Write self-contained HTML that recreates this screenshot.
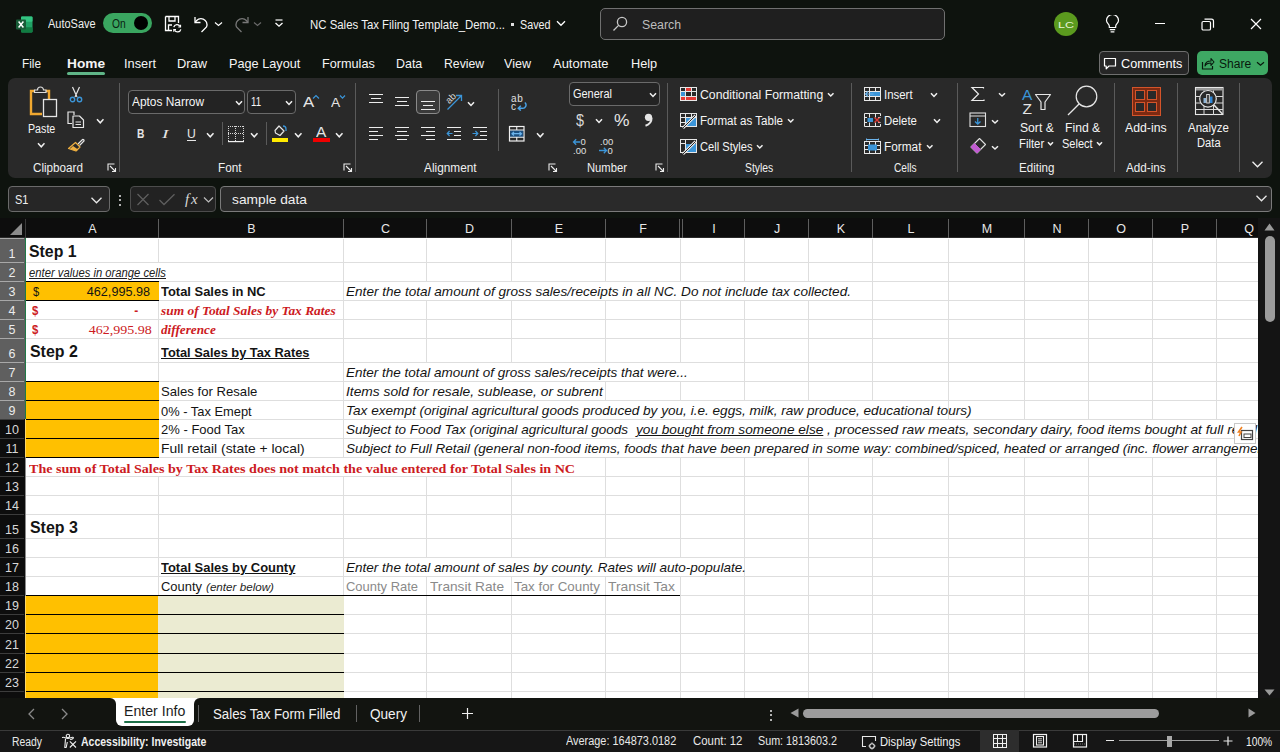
<!DOCTYPE html>
<html><head><meta charset="utf-8"><style>
html,body{margin:0;padding:0;width:1280px;height:752px;overflow:hidden;background:#0e130e;}
div,svg{box-sizing:border-box}
</style></head><body>
<svg style="position:absolute;left:16px;top:16px;" width="17" height="17" viewBox="0 0 17 17" fill="none">
<rect x="5" y="0.5" width="11.5" height="16" rx="1.2" fill="#21a366"/>
<rect x="5" y="0.5" width="11.5" height="5.3" rx="1" fill="#33c481"/>
<rect x="5" y="11.2" width="11.5" height="5.3" rx="1" fill="#107c41"/>
<rect x="0" y="3.5" width="10" height="10" rx="1" fill="#185c37"/>
<path d="M2.6 5.6 L7.4 11.4 M7.4 5.6 L2.6 11.4" stroke="#fff" stroke-width="1.5"/>
</svg>
<div id="t0" style="position:absolute;left:48px;top:17.75px;font-family:'Liberation Sans',sans-serif;font-size:12px;line-height:1;font-weight:400;font-style:normal;color:#f0f0f0;white-space:pre;transform-origin:left;transform:scaleX(0.9146);">AutoSave</div>
<div style="position:absolute;left:103px;top:13px;width:49px;height:20px;background:#3aa660;border-radius:10px;"></div>
<div id="t1" style="position:absolute;left:112px;top:17.50px;font-family:'Liberation Sans',sans-serif;font-size:12px;line-height:1;font-weight:400;font-style:normal;color:#0b1f12;white-space:pre;transform-origin:left;transform:scaleX(0.8554);">On</div>
<div style="position:absolute;left:134px;top:16px;width:14px;height:14px;background:#000;border-radius:50%;"></div>
<svg style="position:absolute;left:164px;top:15px;" width="19" height="19" viewBox="0 0 19 19" fill="none">
<path d="M1.5 1.5 H14.5 V8" stroke="#fff" stroke-width="1.3"/>
<path d="M1.5 1.5 V15.5 H8" stroke="#fff" stroke-width="1.3"/>
<path d="M5 1.5 V6 H11 V1.5" stroke="#fff" stroke-width="1.3"/>
<path d="M4.5 15.5 V10 H8" stroke="#fff" stroke-width="1.3"/>
<path d="M9.8 12.2 A3.3 3.3 0 0 1 16 11.5 M16.8 14.3 A3.3 3.3 0 0 1 10.6 15" stroke="#fff" stroke-width="1.3"/>
<path d="M16.5 9.8 V12 H14.3 M9.8 16.7 V14.5 H12" stroke="#fff" stroke-width="1.2"/>
</svg>
<svg style="position:absolute;left:193px;top:15px;" width="18" height="18" viewBox="0 0 18 18" fill="none">
<path d="M2 2 V7.5 H7.5" stroke="#fff" stroke-width="1.3"/>
<path d="M2.3 7.3 A6 6 0 1 1 13.5 12 L8.5 17" stroke="#fff" stroke-width="1.3"/>
</svg>
<svg style="position:absolute;left:214px;top:21px;" width="9" height="6" viewBox="0 0 9 6" fill="none"><path d="M1 1.5 L4.5 4.5 L8 1.5" stroke="#fff" stroke-width="1.2"/></svg>
<svg style="position:absolute;left:232px;top:15px;" width="18" height="18" viewBox="0 0 18 18" fill="none">
<path d="M16 2 V7.5 H10.5" stroke="#777" stroke-width="1.3"/>
<path d="M15.7 7.3 A6 6 0 1 0 4.5 12 L9.5 17" stroke="#777" stroke-width="1.3"/>
</svg>
<svg style="position:absolute;left:253px;top:21px;" width="9" height="6" viewBox="0 0 9 6" fill="none"><path d="M1 1.5 L4.5 4.5 L8 1.5" stroke="#6a6a6a" stroke-width="1.2"/></svg>
<svg style="position:absolute;left:274px;top:19px;" width="10" height="9" viewBox="0 0 10 9" fill="none"><path d="M1.5 1 H8.5" stroke="#fff" stroke-width="1.2"/><path d="M1.5 4 L5 7.2 L8.5 4" stroke="#fff" stroke-width="1.3"/></svg>
<div id="t2" style="position:absolute;left:310px;top:18.75px;font-family:'Liberation Sans',sans-serif;font-size:12.5px;line-height:1;font-weight:400;font-style:normal;color:#f2f2f2;white-space:pre;transform-origin:left;transform:scaleX(0.9132);">NC Sales Tax Filing Template_Demo...</div>
<div style="position:absolute;left:510.5px;top:23px;width:3px;height:3px;background:#e0e0e0;"></div>
<div id="t3" style="position:absolute;left:520px;top:18.75px;font-family:'Liberation Sans',sans-serif;font-size:12.5px;line-height:1;font-weight:400;font-style:normal;color:#f2f2f2;white-space:pre;transform-origin:left;transform:scaleX(0.8603);">Saved</div>
<svg style="position:absolute;left:556px;top:20px;" width="10" height="7" viewBox="0 0 10 7" fill="none"><path d="M1 1.3 L5 5.3 L9 1.3" stroke="#fff" stroke-width="1.3"/></svg>
<div style="position:absolute;left:600px;top:8px;width:345px;height:32px;background:#1f1f1f;border:1px solid #707070;border-radius:5px;"></div>
<svg style="position:absolute;left:612px;top:16px;" width="17" height="16" viewBox="0 0 17 16" fill="none"><circle cx="10" cy="6" r="4.6" stroke="#c8c8c8" stroke-width="1.3"/><path d="M6.6 9.4 L1.5 14.5" stroke="#c8c8c8" stroke-width="1.3"/></svg>
<div id="t4" style="position:absolute;left:642px;top:18.90px;font-family:'Liberation Sans',sans-serif;font-size:12.5px;line-height:1;font-weight:400;font-style:normal;color:#bdbdbd;white-space:pre;transform-origin:left;transform:scaleX(0.9846);">Search</div>
<div style="position:absolute;left:1054px;top:12px;width:24px;height:24px;background:#5b9a1e;border-radius:50%;"></div>
<div id="t5" style="position:absolute;left:1058px;top:20.00px;font-family:'Liberation Sans',sans-serif;font-size:9.5px;line-height:1;font-weight:400;font-style:normal;color:#e6f3d6;white-space:pre;transform-origin:left;transform:scaleX(1.3162);">LC</div>
<svg style="position:absolute;left:1105px;top:15px;" width="15" height="18" viewBox="0 0 15 18" fill="none">
<path d="M4.3 11 C4.3 9 1.5 8 1.5 5.5 A6 6 0 0 1 13.5 5.5 C13.5 8 10.7 9 10.7 11 V12.5 H4.3 Z" stroke="#fff" stroke-width="1.2" stroke-linejoin="round"/>
<path d="M4.8 14.6 H10.2 M5.6 16.8 H9.4" stroke="#fff" stroke-width="1.2"/>
</svg>
<div style="position:absolute;left:1155px;top:23px;width:10px;height:1px;background:#fff;"></div>
<svg style="position:absolute;left:1201px;top:18px;" width="14" height="13" viewBox="0 0 14 13" fill="none"><rect x="1" y="3.5" width="8.5" height="8.5" rx="1.3" stroke="#fff" stroke-width="1.2"/><path d="M3.5 1.2 H10.5 A2 2 0 0 1 12.5 3.2 V9.8" stroke="#fff" stroke-width="1.2"/></svg>
<svg style="position:absolute;left:1250px;top:18px;" width="12" height="12" viewBox="0 0 12 12" fill="none"><path d="M1 1 L11 11 M11 1 L1 11" stroke="#fff" stroke-width="1.2"/></svg>
<div id="t6" style="position:absolute;left:22px;top:57.00px;font-family:'Liberation Sans',sans-serif;font-size:13.5px;line-height:1;font-weight:400;font-style:normal;color:#f5f5f5;white-space:pre;transform-origin:left;transform:scaleX(0.8729);">File</div>
<div id="t7" style="position:absolute;left:67px;top:57.00px;font-family:'Liberation Sans',sans-serif;font-size:13.5px;line-height:1;font-weight:700;font-style:normal;color:#f5f5f5;white-space:pre;transform-origin:left;transform:scaleX(1.0129);">Home</div>
<div id="t8" style="position:absolute;left:124px;top:57.00px;font-family:'Liberation Sans',sans-serif;font-size:13.5px;line-height:1;font-weight:400;font-style:normal;color:#f5f5f5;white-space:pre;transform-origin:left;transform:scaleX(0.9477);">Insert</div>
<div id="t9" style="position:absolute;left:177px;top:57.00px;font-family:'Liberation Sans',sans-serif;font-size:13.5px;line-height:1;font-weight:400;font-style:normal;color:#f5f5f5;white-space:pre;transform-origin:left;transform:scaleX(0.9519);">Draw</div>
<div id="t10" style="position:absolute;left:229px;top:57.00px;font-family:'Liberation Sans',sans-serif;font-size:13.5px;line-height:1;font-weight:400;font-style:normal;color:#f5f5f5;white-space:pre;transform-origin:left;transform:scaleX(0.9405);">Page Layout</div>
<div id="t11" style="position:absolute;left:322px;top:57.00px;font-family:'Liberation Sans',sans-serif;font-size:13.5px;line-height:1;font-weight:400;font-style:normal;color:#f5f5f5;white-space:pre;transform-origin:left;transform:scaleX(0.9384);">Formulas</div>
<div id="t12" style="position:absolute;left:396px;top:57.00px;font-family:'Liberation Sans',sans-serif;font-size:13.5px;line-height:1;font-weight:400;font-style:normal;color:#f5f5f5;white-space:pre;transform-origin:left;transform:scaleX(0.9218);">Data</div>
<div id="t13" style="position:absolute;left:444px;top:57.00px;font-family:'Liberation Sans',sans-serif;font-size:13.5px;line-height:1;font-weight:400;font-style:normal;color:#f5f5f5;white-space:pre;transform-origin:left;transform:scaleX(0.9059);">Review</div>
<div id="t14" style="position:absolute;left:504px;top:57.00px;font-family:'Liberation Sans',sans-serif;font-size:13.5px;line-height:1;font-weight:400;font-style:normal;color:#f5f5f5;white-space:pre;transform-origin:left;transform:scaleX(0.9300);">View</div>
<div id="t15" style="position:absolute;left:553px;top:57.00px;font-family:'Liberation Sans',sans-serif;font-size:13.5px;line-height:1;font-weight:400;font-style:normal;color:#f5f5f5;white-space:pre;transform-origin:left;transform:scaleX(0.9603);">Automate</div>
<div id="t16" style="position:absolute;left:631px;top:57.00px;font-family:'Liberation Sans',sans-serif;font-size:13.5px;line-height:1;font-weight:400;font-style:normal;color:#f5f5f5;white-space:pre;transform-origin:left;transform:scaleX(0.9436);">Help</div>
<div style="position:absolute;left:67px;top:72px;width:38px;height:3px;background:#5fb587;border-radius:2px;"></div>
<div style="position:absolute;left:1099px;top:51px;width:90px;height:24px;background:#262626;border:1px solid #6f6f6f;border-radius:4px;"></div>
<svg style="position:absolute;left:1103px;top:57px;" width="14" height="13" viewBox="0 0 14 13" fill="none"><path d="M1.5 1.5 H12.5 V9 H6 L3.2 11.8 V9 H1.5 Z" stroke="#fff" stroke-width="1.2" stroke-linejoin="round"/></svg>
<div id="t17" style="position:absolute;left:1120.5px;top:57.60px;font-family:'Liberation Sans',sans-serif;font-size:12.5px;line-height:1;font-weight:400;font-style:normal;color:#fff;white-space:pre;transform-origin:left;transform:scaleX(1.0143);">Comments</div>
<div style="position:absolute;left:1197px;top:51px;width:71px;height:24px;background:#3ea863;border-radius:5px;"></div>
<svg style="position:absolute;left:1201px;top:57px;" width="14" height="13" viewBox="0 0 14 13" fill="none"><path d="M1.5 5 V12 H11.5 V9" stroke="#08180d" stroke-width="1.2"/><path d="M4 9 C4 5.5 6.5 4 10 4 V1.5 L13 5 L10 8.5 V6 C7 6 5 7 4 9 Z" stroke="#08180d" stroke-width="1.1" stroke-linejoin="round"/></svg>
<div id="t18" style="position:absolute;left:1218.5px;top:57.60px;font-family:'Liberation Sans',sans-serif;font-size:12.5px;line-height:1;font-weight:400;font-style:normal;color:#08180d;white-space:pre;transform-origin:left;transform:scaleX(0.9652);">Share</div>
<svg style="position:absolute;left:1256px;top:61px;" width="9" height="6" viewBox="0 0 9 6" fill="none"><path d="M1 1.3 L4.5 4.3 L8 1.3" stroke="#08180d" stroke-width="1.2"/></svg>
<div style="position:absolute;left:8px;top:78px;width:1264px;height:100px;background:#292929;border-radius:7px;"></div>
<div id="t19" style="position:absolute;left:32.6px;top:161.75px;font-family:'Liberation Sans',sans-serif;font-size:12px;line-height:1;font-weight:400;font-style:normal;color:#f0f0f0;white-space:pre;transform-origin:left;transform:scaleX(0.9713);">Clipboard</div>
<div id="t20" style="position:absolute;left:218.4px;top:161.75px;font-family:'Liberation Sans',sans-serif;font-size:12px;line-height:1;font-weight:400;font-style:normal;color:#f0f0f0;white-space:pre;transform-origin:left;transform:scaleX(0.9785);">Font</div>
<div id="t21" style="position:absolute;left:424.1px;top:161.75px;font-family:'Liberation Sans',sans-serif;font-size:12px;line-height:1;font-weight:400;font-style:normal;color:#f0f0f0;white-space:pre;transform-origin:left;transform:scaleX(0.9855);">Alignment</div>
<div id="t22" style="position:absolute;left:586.8px;top:161.75px;font-family:'Liberation Sans',sans-serif;font-size:12px;line-height:1;font-weight:400;font-style:normal;color:#f0f0f0;white-space:pre;transform-origin:left;transform:scaleX(0.9347);">Number</div>
<div id="t23" style="position:absolute;left:745.2px;top:161.75px;font-family:'Liberation Sans',sans-serif;font-size:12px;line-height:1;font-weight:400;font-style:normal;color:#f0f0f0;white-space:pre;transform-origin:left;transform:scaleX(0.8627);">Styles</div>
<div id="t24" style="position:absolute;left:893.9px;top:161.75px;font-family:'Liberation Sans',sans-serif;font-size:12px;line-height:1;font-weight:400;font-style:normal;color:#f0f0f0;white-space:pre;transform-origin:left;transform:scaleX(0.8473);">Cells</div>
<div id="t25" style="position:absolute;left:1018.6px;top:161.75px;font-family:'Liberation Sans',sans-serif;font-size:12px;line-height:1;font-weight:400;font-style:normal;color:#f0f0f0;white-space:pre;transform-origin:left;transform:scaleX(0.9645);">Editing</div>
<div id="t26" style="position:absolute;left:1126px;top:161.75px;font-family:'Liberation Sans',sans-serif;font-size:12px;line-height:1;font-weight:400;font-style:normal;color:#f0f0f0;white-space:pre;transform-origin:left;transform:scaleX(0.9733);">Add-ins</div>
<div style="position:absolute;left:119px;top:83px;width:1px;height:89px;background:#5a5a5a;"></div>
<div style="position:absolute;left:355px;top:83px;width:1px;height:89px;background:#5a5a5a;"></div>
<div style="position:absolute;left:667px;top:83px;width:1px;height:89px;background:#5a5a5a;"></div>
<div style="position:absolute;left:851px;top:83px;width:1px;height:89px;background:#5a5a5a;"></div>
<div style="position:absolute;left:957px;top:83px;width:1px;height:89px;background:#5a5a5a;"></div>
<div style="position:absolute;left:1114px;top:83px;width:1px;height:89px;background:#5a5a5a;"></div>
<div style="position:absolute;left:1177px;top:83px;width:1px;height:89px;background:#5a5a5a;"></div>
<div style="position:absolute;left:1239px;top:83px;width:1px;height:89px;background:#5a5a5a;"></div>
<svg style="position:absolute;left:107px;top:163px;" width="10" height="9" viewBox="0 0 10 9" fill="none"><path d="M1 7.5 V1 H7.5" stroke="#ececec" stroke-width="1.1"/><path d="M3 3 L8.5 8.5 M5 8.5 H8.5 V5" stroke="#ececec" stroke-width="1.1"/></svg>
<svg style="position:absolute;left:343px;top:163px;" width="10" height="9" viewBox="0 0 10 9" fill="none"><path d="M1 7.5 V1 H7.5" stroke="#ececec" stroke-width="1.1"/><path d="M3 3 L8.5 8.5 M5 8.5 H8.5 V5" stroke="#ececec" stroke-width="1.1"/></svg>
<svg style="position:absolute;left:548px;top:163px;" width="10" height="9" viewBox="0 0 10 9" fill="none"><path d="M1 7.5 V1 H7.5" stroke="#ececec" stroke-width="1.1"/><path d="M3 3 L8.5 8.5 M5 8.5 H8.5 V5" stroke="#ececec" stroke-width="1.1"/></svg>
<svg style="position:absolute;left:655px;top:163px;" width="10" height="9" viewBox="0 0 10 9" fill="none"><path d="M1 7.5 V1 H7.5" stroke="#ececec" stroke-width="1.1"/><path d="M3 3 L8.5 8.5 M5 8.5 H8.5 V5" stroke="#ececec" stroke-width="1.1"/></svg>
<svg style="position:absolute;left:28px;top:85px;" width="32" height="34" viewBox="0 0 32 34" fill="none">
<path d="M7 6 H3 V29 H14" stroke="#f0a830" stroke-width="2.4"/>
<path d="M16 6 H21 V14" stroke="#f0a830" stroke-width="2.4"/>
<path d="M6.5 7.5 V5 H9.5 A3 3 0 0 1 15.5 5 H18 V7.5 Z" stroke="#dcdcdc" stroke-width="1.2" fill="#292929"/>
<rect x="15.5" y="14.5" width="13" height="17" stroke="#e6e6e6" stroke-width="1.3" fill="#292929"/>
</svg>
<div id="t27" style="position:absolute;left:27.7px;top:122.50px;font-family:'Liberation Sans',sans-serif;font-size:12.5px;line-height:1;font-weight:400;font-style:normal;color:#f5f5f5;white-space:pre;transform-origin:left;transform:scaleX(0.8540);">Paste</div>
<svg style="position:absolute;left:36.5px;top:142px;" width="8.5" height="6.8" viewBox="0 0 8.5 6.8" fill="none"><path d="M1 1.2 L4.25 4.8 L7.5 1.2" stroke="#f0f0f0" stroke-width="1.5"/></svg>
<svg style="position:absolute;left:69px;top:86px;" width="14" height="17" viewBox="0 0 14 17" fill="none">
<path d="M3.5 1 L8 11 M10.5 1 L6 11" stroke="#e6e6e6" stroke-width="1.2"/>
<circle cx="3.5" cy="13.5" r="2.2" stroke="#3b95d8" stroke-width="1.4"/>
<circle cx="10.5" cy="13.5" r="2.2" stroke="#3b95d8" stroke-width="1.4"/>
</svg>
<svg style="position:absolute;left:67px;top:111px;" width="18" height="18" viewBox="0 0 18 18" fill="none">
<path d="M7 4 V1 H1 V12.5 H5" stroke="#e6e6e6" stroke-width="1.2"/>
<path d="M6 5 H12.5 L16.5 9 V16.5 H6 Z" stroke="#e6e6e6" stroke-width="1.2" stroke-linejoin="round"/>
<path d="M8.5 11 H14 M8.5 13.5 H14" stroke="#e6e6e6" stroke-width="1"/>
</svg>
<svg style="position:absolute;left:95.5px;top:118px;" width="8.5" height="6.8" viewBox="0 0 8.5 6.8" fill="none"><path d="M1 1.2 L4.25 4.8 L7.5 1.2" stroke="#f0f0f0" stroke-width="1.5"/></svg>
<svg style="position:absolute;left:67px;top:137px;" width="18" height="17" viewBox="0 0 18 17" fill="none">
<path d="M11 7 L15.5 2.5 A1.2 1.2 0 0 1 17 4 L12.5 8.5" stroke="#e6e6e6" stroke-width="1.2"/>
<path d="M8.5 5.5 L13 10 L9 14 L1.5 11.5 Z" stroke="#f0b040" stroke-width="1.2" stroke-linejoin="round"/>
<path d="M3 12 L9.5 14 L11 12.5 L6 9 Z" fill="#f0b040"/>
</svg>
<div style="position:absolute;left:128px;top:90px;width:117px;height:24px;background:#232323;border:1px solid #6a6a6a;border-radius:4px;"></div>
<div id="t28" style="position:absolute;left:131.7px;top:95.50px;font-family:'Liberation Sans',sans-serif;font-size:12.5px;line-height:1;font-weight:400;font-style:normal;color:#f5f5f5;white-space:pre;transform-origin:left;transform:scaleX(0.9520);">Aptos Narrow</div>
<svg style="position:absolute;left:234.5px;top:99.8px;" width="8" height="6.5" viewBox="0 0 8 6.5" fill="none"><path d="M1 1.2 L4.0 4.5 L7 1.2" stroke="#f0f0f0" stroke-width="1.5"/></svg>
<div style="position:absolute;left:247px;top:90px;width:49px;height:24px;background:#232323;border:1px solid #6a6a6a;border-radius:4px;"></div>
<div id="t29" style="position:absolute;left:250.6px;top:95.50px;font-family:'Liberation Sans',sans-serif;font-size:12.5px;line-height:1;font-weight:400;font-style:normal;color:#f5f5f5;white-space:pre;transform-origin:left;transform:scaleX(0.7702);">11</div>
<svg style="position:absolute;left:285px;top:99.8px;" width="8" height="6.5" viewBox="0 0 8 6.5" fill="none"><path d="M1 1.2 L4.0 4.5 L7 1.2" stroke="#f0f0f0" stroke-width="1.5"/></svg>
<div id="t30" style="position:absolute;left:302.5px;top:93.60px;font-family:'Liberation Sans',sans-serif;font-size:15.5px;line-height:1;font-weight:400;font-style:normal;color:#e6e6e6;white-space:pre;transform-origin:left;transform:scaleX(1.0828);">A</div>
<svg style="position:absolute;left:311.5px;top:94px;" width="8" height="6" viewBox="0 0 8 6" fill="none"><path d="M1 4.5 L4 1.5 L7 4.5" stroke="#3b95d8" stroke-width="1.2"/></svg>
<div id="t31" style="position:absolute;left:330.5px;top:96.60px;font-family:'Liberation Sans',sans-serif;font-size:12.5px;line-height:1;font-weight:400;font-style:normal;color:#e6e6e6;white-space:pre;transform-origin:left;transform:scaleX(1.1026);">A</div>
<svg style="position:absolute;left:338.5px;top:94px;" width="7" height="6" viewBox="0 0 7 6" fill="none"><path d="M1 1.5 L3.5 4.2 L6 1.5" stroke="#3b95d8" stroke-width="1.2"/></svg>
<div id="t32" style="position:absolute;left:136.6px;top:126.80px;font-family:'Liberation Sans',sans-serif;font-size:13px;line-height:1;font-weight:700;font-style:normal;color:#e6e6e6;white-space:pre;transform-origin:left;transform:scaleX(0.7880);">B</div>
<div id="t33" style="position:absolute;left:162px;top:126.80px;font-family:'Liberation Serif',serif;font-size:13px;line-height:1;font-weight:400;font-style:italic;color:#e6e6e6;white-space:pre;transform-origin:left;transform:scaleX(1.4964);">I</div>
<div id="t34" style="position:absolute;left:187px;top:126.80px;font-family:'Liberation Sans',sans-serif;font-size:13px;line-height:1;font-weight:400;font-style:normal;color:#e6e6e6;white-space:pre;transform-origin:left;transform:scaleX(0.9371);">U</div>
<div style="position:absolute;left:187px;top:139.5px;width:9px;height:1px;background:#e6e6e6;"></div>
<svg style="position:absolute;left:206px;top:131.5px;" width="8.5" height="6.8" viewBox="0 0 8.5 6.8" fill="none"><path d="M1 1.2 L4.25 4.8 L7.5 1.2" stroke="#f0f0f0" stroke-width="1.5"/></svg>
<div style="position:absolute;left:221.5px;top:122px;width:1px;height:23px;background:#5a5a5a;"></div>
<svg style="position:absolute;left:227px;top:125px;" width="18" height="18" viewBox="0 0 18 18" fill="none"><rect x="3" y="1" width="1" height="1" fill="#d8d8d8"/><rect x="8" y="9" width="1" height="1" fill="#d8d8d8"/><rect x="11" y="8" width="1" height="1" fill="#d8d8d8"/><rect x="8" y="15" width="1" height="1" fill="#d8d8d8"/><rect x="16" y="1" width="1" height="1" fill="#d8d8d8"/><rect x="5" y="1" width="1" height="1" fill="#d8d8d8"/><rect x="13" y="8" width="1" height="1" fill="#d8d8d8"/><rect x="16" y="7" width="1" height="1" fill="#d8d8d8"/><rect x="16" y="13" width="1" height="1" fill="#d8d8d8"/><rect x="1" y="3" width="1" height="1" fill="#d8d8d8"/><rect x="7" y="1" width="1" height="1" fill="#d8d8d8"/><rect x="1" y="9" width="1" height="1" fill="#d8d8d8"/><rect x="1" y="15" width="1" height="1" fill="#d8d8d8"/><rect x="15" y="8" width="1" height="1" fill="#d8d8d8"/><rect x="9" y="1" width="1" height="1" fill="#d8d8d8"/><rect x="8" y="5" width="1" height="1" fill="#d8d8d8"/><rect x="11" y="1" width="1" height="1" fill="#d8d8d8"/><rect x="8" y="11" width="1" height="1" fill="#d8d8d8"/><rect x="13" y="1" width="1" height="1" fill="#d8d8d8"/><rect x="16" y="3" width="1" height="1" fill="#d8d8d8"/><rect x="16" y="9" width="1" height="1" fill="#d8d8d8"/><rect x="16" y="15" width="1" height="1" fill="#d8d8d8"/><rect x="1" y="5" width="1" height="1" fill="#d8d8d8"/><rect x="1" y="8" width="1" height="1" fill="#d8d8d8"/><rect x="15" y="1" width="1" height="1" fill="#d8d8d8"/><rect x="1" y="11" width="1" height="1" fill="#d8d8d8"/><rect x="8" y="1" width="1" height="1" fill="#d8d8d8"/><rect x="8" y="7" width="1" height="1" fill="#d8d8d8"/><rect x="8" y="13" width="1" height="1" fill="#d8d8d8"/><rect x="3" y="8" width="1" height="1" fill="#d8d8d8"/><rect x="16" y="5" width="1" height="1" fill="#d8d8d8"/><rect x="5" y="8" width="1" height="1" fill="#d8d8d8"/><rect x="16" y="11" width="1" height="1" fill="#d8d8d8"/><rect x="1" y="1" width="1" height="1" fill="#d8d8d8"/><rect x="1" y="7" width="1" height="1" fill="#d8d8d8"/><rect x="1" y="13" width="1" height="1" fill="#d8d8d8"/><rect x="7" y="8" width="1" height="1" fill="#d8d8d8"/><rect x="8" y="3" width="1" height="1" fill="#d8d8d8"/><rect x="9" y="8" width="1" height="1" fill="#d8d8d8"/><rect x="1" y="16" width="16" height="1.2" fill="#f0f0f0"/></svg>
<svg style="position:absolute;left:250.3px;top:132px;" width="8.5" height="6.8" viewBox="0 0 8.5 6.8" fill="none"><path d="M1 1.2 L4.25 4.8 L7.5 1.2" stroke="#f0f0f0" stroke-width="1.5"/></svg>
<div style="position:absolute;left:265.5px;top:122px;width:1px;height:23px;background:#5a5a5a;"></div>
<svg style="position:absolute;left:272px;top:125px;" width="18" height="12" viewBox="0 0 18 12" fill="none">
<path d="M3 5.5 L7 1 L12 6 L8 10.5 L3.5 8 Z" stroke="#e6e6e6" stroke-width="1.2" stroke-linejoin="round"/>
<path d="M11 1 A3 3 0 0 1 14 4 V6" stroke="#3b95d8" stroke-width="1.3"/>
</svg>
<div style="position:absolute;left:272px;top:137.8px;width:16px;height:4px;background:#ffea00;"></div>
<svg style="position:absolute;left:294px;top:132px;" width="8.5" height="6.8" viewBox="0 0 8.5 6.8" fill="none"><path d="M1 1.2 L4.25 4.8 L7.5 1.2" stroke="#f0f0f0" stroke-width="1.5"/></svg>
<div id="t35" style="position:absolute;left:315.8px;top:124.50px;font-family:'Liberation Sans',sans-serif;font-size:14.5px;line-height:1;font-weight:400;font-style:normal;color:#e6e6e6;white-space:pre;transform-origin:left;transform:scaleX(1.0649);">A</div>
<div style="position:absolute;left:313px;top:137.8px;width:16.7px;height:4px;background:#f00000;"></div>
<svg style="position:absolute;left:335.4px;top:132px;" width="8.5" height="6.8" viewBox="0 0 8.5 6.8" fill="none"><path d="M1 1.2 L4.25 4.8 L7.5 1.2" stroke="#f0f0f0" stroke-width="1.5"/></svg>
<div style="position:absolute;left:369px;top:94px;width:14px;height:1px;background:#ececec;"></div>
<div style="position:absolute;left:371px;top:98px;width:10px;height:1px;background:#ececec;"></div>
<div style="position:absolute;left:369px;top:102px;width:14px;height:1px;background:#ececec;"></div>
<div style="position:absolute;left:395px;top:97px;width:14px;height:1px;background:#ececec;"></div>
<div style="position:absolute;left:397px;top:101px;width:10px;height:1px;background:#ececec;"></div>
<div style="position:absolute;left:395px;top:105px;width:14px;height:1px;background:#ececec;"></div>
<div style="position:absolute;left:416px;top:90px;width:24px;height:24px;background:#3a3a3a;border:1px solid #8a8a8a;border-radius:4px;"></div>
<div style="position:absolute;left:421px;top:101px;width:14px;height:1px;background:#ececec;"></div>
<div style="position:absolute;left:423px;top:105px;width:10px;height:1px;background:#ececec;"></div>
<div style="position:absolute;left:421px;top:109px;width:14px;height:1px;background:#ececec;"></div>
<svg style="position:absolute;left:444px;top:91px;" width="21" height="20" viewBox="0 0 21 20" fill="none">
<text x="0" y="0" transform="translate(5.2 13.2) rotate(-45)" font-family="Liberation Sans" font-size="9.5" fill="#d8d8d8">ab</text>
<path d="M3.5 18.5 L17.5 4.5 M12 4.5 H17.5 V10" stroke="#3b95d8" stroke-width="1.3"/>
</svg>
<svg style="position:absolute;left:466.5px;top:100.5px;" width="8" height="6.5" viewBox="0 0 8 6.5" fill="none"><path d="M1 1.2 L4.0 4.5 L7 1.2" stroke="#f0f0f0" stroke-width="1.5"/></svg>
<div style="position:absolute;left:369px;top:127px;width:14px;height:1px;background:#ececec;"></div>
<div style="position:absolute;left:369px;top:131px;width:9px;height:1px;background:#ececec;"></div>
<div style="position:absolute;left:369px;top:135px;width:14px;height:1px;background:#ececec;"></div>
<div style="position:absolute;left:369px;top:139px;width:9px;height:1px;background:#ececec;"></div>
<div style="position:absolute;left:395px;top:127px;width:14px;height:1px;background:#ececec;"></div>
<div style="position:absolute;left:397px;top:131px;width:10px;height:1px;background:#ececec;"></div>
<div style="position:absolute;left:395px;top:135px;width:14px;height:1px;background:#ececec;"></div>
<div style="position:absolute;left:397px;top:139px;width:10px;height:1px;background:#ececec;"></div>
<div style="position:absolute;left:421px;top:127px;width:14px;height:1px;background:#ececec;"></div>
<div style="position:absolute;left:426px;top:131px;width:9px;height:1px;background:#ececec;"></div>
<div style="position:absolute;left:421px;top:135px;width:14px;height:1px;background:#ececec;"></div>
<div style="position:absolute;left:426px;top:139px;width:9px;height:1px;background:#ececec;"></div>
<div style="position:absolute;left:447px;top:127px;width:14px;height:1px;background:#ececec;"></div>
<div style="position:absolute;left:454px;top:131px;width:7px;height:1px;background:#ececec;"></div>
<div style="position:absolute;left:454px;top:135px;width:7px;height:1px;background:#ececec;"></div>
<div style="position:absolute;left:447px;top:139px;width:14px;height:1px;background:#ececec;"></div>
<div style="position:absolute;left:473px;top:127px;width:14px;height:1px;background:#ececec;"></div>
<div style="position:absolute;left:480px;top:131px;width:7px;height:1px;background:#ececec;"></div>
<div style="position:absolute;left:480px;top:135px;width:7px;height:1px;background:#ececec;"></div>
<div style="position:absolute;left:473px;top:139px;width:14px;height:1px;background:#ececec;"></div>
<svg style="position:absolute;left:446px;top:129px;" width="8" height="9" viewBox="0 0 8 9" fill="none"><path d="M6.5 4.5 H1.2 M3.6 2 L1.2 4.5 L3.6 7" stroke="#3b95d8" stroke-width="1.2"/></svg>
<svg style="position:absolute;left:472px;top:129px;" width="8" height="9" viewBox="0 0 8 9" fill="none"><path d="M0.5 4.5 H5.8 M3.4 2 L5.8 4.5 L3.4 7" stroke="#3b95d8" stroke-width="1.2"/></svg>
<div style="position:absolute;left:498px;top:89px;width:1px;height:62px;background:#5a5a5a;"></div>
<svg style="position:absolute;left:510px;top:93px;" width="18" height="18" viewBox="0 0 18 18" fill="none">
<text x="1" y="8.5" font-family="Liberation Sans" font-size="10" fill="#e0e0e0" letter-spacing="0.8">ab</text>
<text x="1" y="16.5" font-family="Liberation Sans" font-size="10" fill="#e0e0e0">c</text>
<path d="M14.8 9.5 A3.3 3.3 0 0 1 12.2 15.3 H8.3 M10.8 12.8 L8.2 15.3 L10.8 17.6" stroke="#4aa3e8" stroke-width="1.4"/>
</svg>
<svg style="position:absolute;left:508px;top:125px;" width="18" height="17" viewBox="0 0 18 17" fill="none">
<rect x="1.5" y="1.5" width="14.5" height="14.5" stroke="#f0f0f0" stroke-width="1.2"/>
<rect x="2.2" y="5.2" width="13" height="7" fill="#1b4f80"/>
<path d="M1.5 5 H16 M1.5 12.3 H16 M8.75 1.5 V5 M8.75 12.3 V16" stroke="#f0f0f0" stroke-width="1.1"/>
<path d="M4 8.7 H13.5 M6 6.9 L4 8.7 L6 10.5 M11.5 6.9 L13.5 8.7 L11.5 10.5" stroke="#6cb4ec" stroke-width="1.2"/>
</svg>
<svg style="position:absolute;left:536px;top:131.5px;" width="8.5" height="6.8" viewBox="0 0 8.5 6.8" fill="none"><path d="M1 1.2 L4.25 4.8 L7.5 1.2" stroke="#f0f0f0" stroke-width="1.5"/></svg>
<div style="position:absolute;left:569px;top:82px;width:91px;height:24px;background:#232323;border:1px solid #6a6a6a;border-radius:4px;"></div>
<div id="t36" style="position:absolute;left:572.7px;top:87.60px;font-family:'Liberation Sans',sans-serif;font-size:12.5px;line-height:1;font-weight:400;font-style:normal;color:#f5f5f5;white-space:pre;transform-origin:left;transform:scaleX(0.8767);">General</div>
<svg style="position:absolute;left:649.3px;top:91.5px;" width="8" height="6.5" viewBox="0 0 8 6.5" fill="none"><path d="M1 1.2 L4.0 4.5 L7 1.2" stroke="#f0f0f0" stroke-width="1.5"/></svg>
<div id="t37" style="position:absolute;left:576px;top:113.00px;font-family:'Liberation Sans',sans-serif;font-size:16px;line-height:1;font-weight:400;font-style:normal;color:#d8d8d8;white-space:pre;transform-origin:left;transform:scaleX(0.8982);">$</div>
<svg style="position:absolute;left:595.2px;top:117.5px;" width="8" height="6.5" viewBox="0 0 8 6.5" fill="none"><path d="M1 1.2 L4.0 4.5 L7 1.2" stroke="#f0f0f0" stroke-width="1.5"/></svg>
<div id="t38" style="position:absolute;left:614px;top:113.40px;font-family:'Liberation Sans',sans-serif;font-size:16px;line-height:1;font-weight:400;font-style:normal;color:#e6e6e6;white-space:pre;transform-origin:left;transform:scaleX(1.0889);">%</div>
<svg style="position:absolute;left:643px;top:113px;" width="11" height="14" viewBox="0 0 11 14" fill="none"><circle cx="5.5" cy="4.3" r="3.6" fill="#e6e6e6"/><path d="M8.6 4.8 C8.6 8.5 6.5 11.5 2.5 12.8" stroke="#e6e6e6" stroke-width="2"/></svg>
<svg style="position:absolute;left:572px;top:137px;" width="18" height="18" viewBox="0 0 18 18" fill="none">
<text x="8.5" y="8" font-family="Liberation Sans" font-size="9.5" fill="#e0e0e0">0</text>
<text x="1" y="16.8" font-family="Liberation Sans" font-size="9.5" fill="#e0e0e0">.00</text>
<path d="M8 5 H1.5 M4.2 2.3 L1.5 5 L4.2 7.7" stroke="#3b95d8" stroke-width="1.3"/>
</svg>
<svg style="position:absolute;left:598px;top:137px;" width="18" height="18" viewBox="0 0 18 18" fill="none">
<text x="2" y="8" font-family="Liberation Sans" font-size="9.5" fill="#e0e0e0">.00</text>
<text x="9.5" y="16.8" font-family="Liberation Sans" font-size="9.5" fill="#e0e0e0">0</text>
<path d="M1 13.5 H8.5 M5.8 10.8 L8.5 13.5 L5.8 16.2" stroke="#3b95d8" stroke-width="1.3"/>
</svg>
<svg style="position:absolute;left:680px;top:87px;" width="18" height="15" viewBox="0 0 18 15" fill="none">
<rect x="0.5" y="0.5" width="16" height="13" stroke="#e8e8e8" stroke-width="1"/><path d="M0.5 4.5 H16.5 M0.5 9.5 H16.5 M5.5 0.5 V13.5 M11.5 0.5 V13.5" stroke="#e8e8e8" stroke-width="1"/>
<rect x="6" y="1" width="5" height="3" fill="#e53935"/>
<rect x="1" y="5" width="4" height="4" fill="#3b95d8"/>
<rect x="6" y="10" width="10" height="3" fill="#e53935"/>
<rect x="1" y="10" width="4" height="3" fill="#e53935"/>
</svg>
<div id="t39" style="position:absolute;left:700.3px;top:89.00px;font-family:'Liberation Sans',sans-serif;font-size:12.5px;line-height:1;font-weight:400;font-style:normal;color:#f5f5f5;white-space:pre;transform-origin:left;transform:scaleX(0.9796);">Conditional Formatting</div>
<svg style="position:absolute;left:827px;top:91.8px;" width="7.5" height="6" viewBox="0 0 7.5 6" fill="none"><path d="M1 1.2 L3.75 4 L6.5 1.2" stroke="#f0f0f0" stroke-width="1.5"/></svg>
<svg style="position:absolute;left:680px;top:113px;" width="18" height="16" viewBox="0 0 18 16" fill="none">
<rect x="0.5" y="0.5" width="16" height="13" stroke="#e8e8e8" stroke-width="1"/><path d="M0.5 4.5 H16.5 M0.5 9.5 H16.5 M5.5 0.5 V13.5 M11.5 0.5 V13.5" stroke="#e8e8e8" stroke-width="1"/>
<rect x="6" y="5" width="10" height="8" fill="#3b95d8"/>
<path d="M3 15 L15.5 2.5" stroke="#e8e8e8" stroke-width="2.6"/>
<path d="M3 15 L15.5 2.5" stroke="#292929" stroke-width="1"/>
</svg>
<div id="t40" style="position:absolute;left:700.3px;top:114.80px;font-family:'Liberation Sans',sans-serif;font-size:12.5px;line-height:1;font-weight:400;font-style:normal;color:#f5f5f5;white-space:pre;transform-origin:left;transform:scaleX(0.9283);">Format as Table</div>
<svg style="position:absolute;left:786.5px;top:117.5px;" width="7.5" height="6" viewBox="0 0 7.5 6" fill="none"><path d="M1 1.2 L3.75 4 L6.5 1.2" stroke="#f0f0f0" stroke-width="1.5"/></svg>
<svg style="position:absolute;left:680px;top:139px;" width="18" height="16" viewBox="0 0 18 16" fill="none">
<rect x="0.5" y="0.5" width="16" height="13" stroke="#e8e8e8" stroke-width="1"/>
<path d="M0.5 4.5 H5.5 M5.5 0.5 V13.5" stroke="#e8e8e8" stroke-width="1"/>
<rect x="6" y="5" width="10" height="8" fill="#3b95d8"/>
<path d="M3 15 L15.5 2.5" stroke="#e8e8e8" stroke-width="2.6"/>
<path d="M3 15 L15.5 2.5" stroke="#292929" stroke-width="1"/>
</svg>
<div id="t41" style="position:absolute;left:700.3px;top:141.00px;font-family:'Liberation Sans',sans-serif;font-size:12.5px;line-height:1;font-weight:400;font-style:normal;color:#f5f5f5;white-space:pre;transform-origin:left;transform:scaleX(0.8908);">Cell Styles</div>
<svg style="position:absolute;left:756px;top:143.5px;" width="7.5" height="6" viewBox="0 0 7.5 6" fill="none"><path d="M1 1.2 L3.75 4 L6.5 1.2" stroke="#f0f0f0" stroke-width="1.5"/></svg>
<svg style="position:absolute;left:864px;top:87px;" width="18" height="15" viewBox="0 0 18 15" fill="none">
<rect x="0.5" y="0.5" width="16" height="13" stroke="#e8e8e8" stroke-width="1"/><path d="M0.5 4.5 H16.5 M0.5 9.5 H16.5 M5.5 0.5 V13.5 M11.5 0.5 V13.5" stroke="#e8e8e8" stroke-width="1"/>
<rect x="6" y="5" width="10" height="4" fill="#3b95d8"/>
<path d="M9.5 7 H1.5 M4.2 4.3 L1.5 7 L4.2 9.7" stroke="#6cb4ec" stroke-width="1.2"/>
</svg>
<div id="t42" style="position:absolute;left:884.3px;top:88.60px;font-family:'Liberation Sans',sans-serif;font-size:12.5px;line-height:1;font-weight:400;font-style:normal;color:#f5f5f5;white-space:pre;transform-origin:left;transform:scaleX(0.9147);">Insert</div>
<svg style="position:absolute;left:929.5px;top:92px;" width="8" height="6.5" viewBox="0 0 8 6.5" fill="none"><path d="M1 1.2 L4.0 4.5 L7 1.2" stroke="#f0f0f0" stroke-width="1.5"/></svg>
<svg style="position:absolute;left:864px;top:113px;" width="18" height="15" viewBox="0 0 18 15" fill="none">
<path d="M0.5 0.5 H16.5 M0.5 13.5 H16.5 M0.5 0.5 V13.5 M5.5 0.5 V4.5 M11.5 0.5 V4.5 M5.5 9.5 V13.5 M11.5 9.5 V13.5 M0.5 4.5 H3 M0.5 9.5 H3 M14 4.5 H16.5 M14 9.5 H16.5 M16.5 0.5 V3 M16.5 11 V13.5" stroke="#e8e8e8" stroke-width="1"/>
<rect x="3.5" y="5" width="5.5" height="4" fill="#3b95d8"/>
<path d="M10.5 4.5 L15.5 9.5 M15.5 4.5 L10.5 9.5" stroke="#e53935" stroke-width="1.3"/>
</svg>
<div id="t43" style="position:absolute;left:884.3px;top:114.50px;font-family:'Liberation Sans',sans-serif;font-size:12.5px;line-height:1;font-weight:400;font-style:normal;color:#f5f5f5;white-space:pre;transform-origin:left;transform:scaleX(0.9103);">Delete</div>
<svg style="position:absolute;left:933.4px;top:118px;" width="8" height="6.5" viewBox="0 0 8 6.5" fill="none"><path d="M1 1.2 L4.0 4.5 L7 1.2" stroke="#f0f0f0" stroke-width="1.5"/></svg>
<svg style="position:absolute;left:864px;top:138px;" width="18" height="17" viewBox="0 0 18 17" fill="none">
<rect x="0.5" y="3.5" width="16" height="12" stroke="#e8e8e8" stroke-width="1"/>
<path d="M0.5 7.5 H16.5 M0.5 11.5 H16.5 M5.5 3.5 V15.5 M11.5 3.5 V15.5" stroke="#e8e8e8" stroke-width="1"/>
<rect x="4" y="6.5" width="9" height="6" fill="#3b95d8"/>
<path d="M2.5 1.5 H14.5 M2.5 0.5 V2.5 M14.5 0.5 V2.5" stroke="#6cb4ec" stroke-width="1"/>
</svg>
<div id="t44" style="position:absolute;left:884.3px;top:140.50px;font-family:'Liberation Sans',sans-serif;font-size:12.5px;line-height:1;font-weight:400;font-style:normal;color:#f5f5f5;white-space:pre;transform-origin:left;transform:scaleX(0.9471);">Format</div>
<svg style="position:absolute;left:925.5px;top:143.5px;" width="7.5" height="6" viewBox="0 0 7.5 6" fill="none"><path d="M1 1.2 L3.75 4 L6.5 1.2" stroke="#f0f0f0" stroke-width="1.5"/></svg>
<svg style="position:absolute;left:970px;top:86px;" width="16" height="16" viewBox="0 0 16 16" fill="none"><path d="M13.5 2.5 V1.5 H2 L8.5 8 L2 14.5 H14 V13.5" stroke="#ececec" stroke-width="1.2" stroke-linejoin="miter"/></svg>
<svg style="position:absolute;left:997.6px;top:92.3px;" width="8" height="6" viewBox="0 0 8 6" fill="none"><path d="M1 1.2 L4.0 4 L7 1.2" stroke="#f0f0f0" stroke-width="1.5"/></svg>
<svg style="position:absolute;left:969px;top:112px;" width="18" height="16" viewBox="0 0 18 16" fill="none">
<rect x="1" y="1" width="15.5" height="13.5" stroke="#e0e0e0" stroke-width="1.1"/>
<path d="M1 4 H16.5" stroke="#e0e0e0" stroke-width="1"/>
<path d="M8.75 6 V12 M6 9.5 L8.75 12 L11.5 9.5" stroke="#3b95d8" stroke-width="1.3"/>
</svg>
<svg style="position:absolute;left:990.6px;top:118.5px;" width="8" height="6" viewBox="0 0 8 6" fill="none"><path d="M1 1.2 L4.0 4 L7 1.2" stroke="#f0f0f0" stroke-width="1.5"/></svg>
<svg style="position:absolute;left:969px;top:137px;" width="18" height="18" viewBox="0 0 18 18" fill="none">
<path d="M10.5 1.5 L16.5 7.5 L8 16 L2 10 Z" stroke="#e0e0e0" stroke-width="1.1" stroke-linejoin="round"/>
<path d="M2 10 L8 16 L11.5 12.5 L5.5 6.5 Z" fill="#c05cd0" stroke="#c05cd0" stroke-width="1"/>
</svg>
<svg style="position:absolute;left:990.6px;top:144.5px;" width="8" height="6" viewBox="0 0 8 6" fill="none"><path d="M1 1.2 L4.0 4 L7 1.2" stroke="#f0f0f0" stroke-width="1.5"/></svg>
<svg style="position:absolute;left:1021px;top:86px;" width="32" height="30" viewBox="0 0 32 30" fill="none">
<text x="1" y="14" font-family="Liberation Sans" font-size="15.5" fill="#3b95d8">A</text>
<text x="1.5" y="28" font-family="Liberation Sans" font-size="15.5" fill="#e6e6e6">Z</text>
<path d="M14.5 8.5 H29.5 L24 16 V23.5 H20 V16 Z" stroke="#e6e6e6" stroke-width="1.2" stroke-linejoin="round"/>
</svg>
<div id="t45" style="position:absolute;left:1019.9px;top:121.60px;font-family:'Liberation Sans',sans-serif;font-size:12.5px;line-height:1;font-weight:400;font-style:normal;color:#f5f5f5;white-space:pre;transform-origin:left;transform:scaleX(0.9727);">Sort &amp;</div>
<div id="t46" style="position:absolute;left:1018.6px;top:137.60px;font-family:'Liberation Sans',sans-serif;font-size:12.5px;line-height:1;font-weight:400;font-style:normal;color:#f5f5f5;white-space:pre;transform-origin:left;transform:scaleX(0.9071);">Filter</div>
<svg style="position:absolute;left:1047px;top:141px;" width="7" height="5.8" viewBox="0 0 7 5.8" fill="none"><path d="M1 1.2 L3.5 3.8 L6 1.2" stroke="#f0f0f0" stroke-width="1.5"/></svg>
<svg style="position:absolute;left:1066px;top:85px;" width="33" height="32" viewBox="0 0 33 32" fill="none"><circle cx="20.5" cy="11.5" r="10.3" stroke="#e6e6e6" stroke-width="1.2"/><path d="M13.3 18.8 L2 30" stroke="#e6e6e6" stroke-width="1.3"/></svg>
<div id="t47" style="position:absolute;left:1065.4px;top:121.60px;font-family:'Liberation Sans',sans-serif;font-size:12.5px;line-height:1;font-weight:400;font-style:normal;color:#f5f5f5;white-space:pre;transform-origin:left;transform:scaleX(0.9740);">Find &amp;</div>
<div id="t48" style="position:absolute;left:1062px;top:137.60px;font-family:'Liberation Sans',sans-serif;font-size:12.5px;line-height:1;font-weight:400;font-style:normal;color:#f5f5f5;white-space:pre;transform-origin:left;transform:scaleX(0.8806);">Select</div>
<svg style="position:absolute;left:1096.3px;top:141px;" width="7" height="5.8" viewBox="0 0 7 5.8" fill="none"><path d="M1 1.2 L3.5 3.8 L6 1.2" stroke="#f0f0f0" stroke-width="1.5"/></svg>
<svg style="position:absolute;left:1131px;top:86px;" width="31" height="31" viewBox="0 0 31 31" fill="none">
<rect x="1" y="1" width="29" height="29" fill="#7c2a12"/>
<rect x="1.5" y="1.5" width="28" height="28" stroke="#d4542a" stroke-width="1"/>
<rect x="4.5" y="4.5" width="9" height="9" fill="#292929" stroke="#d4542a" stroke-width="1"/>
<rect x="16.5" y="4.5" width="9" height="9" fill="#292929" stroke="#d4542a" stroke-width="1"/>
<rect x="4.5" y="16.5" width="9" height="9" fill="#292929" stroke="#d4542a" stroke-width="1"/>
<rect x="16.5" y="16.5" width="9" height="9" fill="#292929" stroke="#d4542a" stroke-width="1"/>
</svg>
<div id="t49" style="position:absolute;left:1125.3px;top:121.60px;font-family:'Liberation Sans',sans-serif;font-size:12.5px;line-height:1;font-weight:400;font-style:normal;color:#f5f5f5;white-space:pre;transform-origin:left;transform:scaleX(0.9813);">Add-ins</div>
<svg style="position:absolute;left:1194px;top:86px;" width="31" height="31" viewBox="0 0 31 31" fill="none">
<rect x="1.5" y="1.5" width="27.5" height="27" stroke="#e8e8e8" stroke-width="1.1"/>
<rect x="2" y="2" width="26.5" height="2.5" fill="#9a9a9a"/>
<path d="M1.5 10.5 H29 M1.5 17 H29 M1.5 23.5 H29 M10 4.5 V29 M19.5 4.5 V29" stroke="#d8d8d8" stroke-width="1"/>
<circle cx="14" cy="12.8" r="8.3" fill="#292929" stroke="#e6e6e6" stroke-width="1.2"/>
<rect x="9.5" y="12" width="2.5" height="5" fill="#8fb4d4"/>
<rect x="12.7" y="8.5" width="2.6" height="8.5" stroke="#e8e8e8" stroke-width="0.9"/>
<rect x="16" y="10.5" width="2.5" height="6.5" fill="#2f86d6"/>
<path d="M20 19 L28.5 28" stroke="#e6e6e6" stroke-width="1.5"/>
</svg>
<div id="t50" style="position:absolute;left:1188.2px;top:121.60px;font-family:'Liberation Sans',sans-serif;font-size:12.5px;line-height:1;font-weight:400;font-style:normal;color:#f5f5f5;white-space:pre;transform-origin:left;transform:scaleX(0.9172);">Analyze</div>
<div id="t51" style="position:absolute;left:1197px;top:137.20px;font-family:'Liberation Sans',sans-serif;font-size:12.5px;line-height:1;font-weight:400;font-style:normal;color:#f5f5f5;white-space:pre;transform-origin:left;transform:scaleX(0.8937);">Data</div>
<svg style="position:absolute;left:1251px;top:160px;" width="13" height="9" viewBox="0 0 13 9" fill="none"><path d="M1.5 1.8 L6.5 6.8 L11.5 1.8" stroke="#f0f0f0" stroke-width="1.3"/></svg>
<div style="position:absolute;left:8px;top:186px;width:102px;height:26px;background:#262626;border:1px solid #6a6a6a;border-radius:4px;"></div>
<div id="t52" style="position:absolute;left:15px;top:192.90px;font-family:'Liberation Sans',sans-serif;font-size:13px;line-height:1;font-weight:400;font-style:normal;color:#f0f0f0;white-space:pre;transform-origin:left;transform:scaleX(0.8424);">S1</div>
<svg style="position:absolute;left:90px;top:196px;" width="13" height="9" viewBox="0 0 13 9" fill="none"><path d="M1.5 1.8 L6.5 6.8 L11.5 1.8" stroke="#e8e8e8" stroke-width="1.3"/></svg>
<div style="position:absolute;left:118.5px;top:194.5px;width:2.2px;height:2.2px;background:#e8e8e8;border-radius:50%;"></div>
<div style="position:absolute;left:118.5px;top:199px;width:2.2px;height:2.2px;background:#e8e8e8;border-radius:50%;"></div>
<div style="position:absolute;left:118.5px;top:203.5px;width:2.2px;height:2.2px;background:#e8e8e8;border-radius:50%;"></div>
<div style="position:absolute;left:130px;top:186px;width:86px;height:26px;background:#222222;border:1px solid #4c4c4c;border-radius:4px;"></div>
<svg style="position:absolute;left:136px;top:193px;" width="14" height="13" viewBox="0 0 14 13" fill="none"><path d="M1.5 1 L12.5 12 M12.5 1 L1.5 12" stroke="#5e5e5e" stroke-width="1.3"/></svg>
<svg style="position:absolute;left:158px;top:193px;" width="18" height="13" viewBox="0 0 18 13" fill="none"><path d="M1.5 7 L6 11.5 L16.5 1.2" stroke="#5e5e5e" stroke-width="1.3"/></svg>
<div id="t53" style="position:absolute;left:185px;top:191.50px;font-family:'Liberation Serif',serif;font-size:15px;line-height:1;font-weight:400;font-style:italic;color:#d8d8d8;white-space:pre;transform-origin:left;">f</div>
<div id="t54" style="position:absolute;left:191px;top:191.50px;font-family:'Liberation Serif',serif;font-size:15px;line-height:1;font-weight:400;font-style:italic;color:#d8d8d8;white-space:pre;transform-origin:left;">x</div>
<svg style="position:absolute;left:203px;top:196px;" width="11" height="8" viewBox="0 0 11 8" fill="none"><path d="M1 1.5 L5.5 6 L10 1.5" stroke="#bdbdbd" stroke-width="1.2"/></svg>
<div style="position:absolute;left:220px;top:186px;width:1052px;height:26px;background:#2a2a2a;border:1px solid #7a7a7a;border-radius:4px;"></div>
<div id="t55" style="position:absolute;left:231.5px;top:192.90px;font-family:'Liberation Sans',sans-serif;font-size:13.5px;line-height:1;font-weight:400;font-style:normal;color:#f0f0f0;white-space:pre;transform-origin:left;transform:scaleX(1.0198);">sample data</div>
<svg style="position:absolute;left:1255px;top:193.5px;" width="13" height="9" viewBox="0 0 13 9" fill="none"><path d="M1.5 1.8 L6.5 6.8 L11.5 1.8" stroke="#e8e8e8" stroke-width="1.3"/></svg>
<div style="position:absolute;left:0px;top:218px;width:1258px;height:20px;background:#0d0d0d;"></div>
<div style="position:absolute;left:0px;top:237px;width:1258px;height:1px;background:#2a2a2a;"></div>
<svg style="position:absolute;left:9px;top:222px;" width="14" height="14" viewBox="0 0 14 14" fill="none"><path d="M13 1 V13 H1 Z" fill="#8c8c8c"/></svg>
<div style="position:absolute;left:25px;top:219px;width:1px;height:19px;background:#3a3a3a;"></div>
<div style="position:absolute;left:158px;top:219px;width:1px;height:19px;background:#5e5e5e;"></div>
<div style="position:absolute;left:343px;top:219px;width:1px;height:19px;background:#5e5e5e;"></div>
<div style="position:absolute;left:426px;top:219px;width:1px;height:19px;background:#5e5e5e;"></div>
<div style="position:absolute;left:511px;top:219px;width:1px;height:19px;background:#5e5e5e;"></div>
<div style="position:absolute;left:605px;top:219px;width:1px;height:19px;background:#5e5e5e;"></div>
<div style="position:absolute;left:679px;top:219px;width:1px;height:19px;background:#5e5e5e;"></div>
<div style="position:absolute;left:682px;top:219px;width:1px;height:19px;background:#5e5e5e;"></div>
<div style="position:absolute;left:744px;top:219px;width:1px;height:19px;background:#5e5e5e;"></div>
<div style="position:absolute;left:808px;top:219px;width:1px;height:19px;background:#5e5e5e;"></div>
<div style="position:absolute;left:872px;top:219px;width:1px;height:19px;background:#5e5e5e;"></div>
<div style="position:absolute;left:948px;top:219px;width:1px;height:19px;background:#5e5e5e;"></div>
<div style="position:absolute;left:1024px;top:219px;width:1px;height:19px;background:#5e5e5e;"></div>
<div style="position:absolute;left:1088px;top:219px;width:1px;height:19px;background:#5e5e5e;"></div>
<div style="position:absolute;left:1152px;top:219px;width:1px;height:19px;background:#5e5e5e;"></div>
<div style="position:absolute;left:1216px;top:219px;width:1px;height:19px;background:#5e5e5e;"></div>
<div id="t56" style="position:absolute;left:72.5px;top:223.00px;font-family:'Liberation Sans',sans-serif;font-size:12.5px;line-height:1;font-weight:400;font-style:normal;color:#e8e8e8;white-space:pre;transform-origin:left;width:40px;text-align:center;">A</div>
<div id="t57" style="position:absolute;left:231.5px;top:223.00px;font-family:'Liberation Sans',sans-serif;font-size:12.5px;line-height:1;font-weight:400;font-style:normal;color:#e8e8e8;white-space:pre;transform-origin:left;width:40px;text-align:center;">B</div>
<div id="t58" style="position:absolute;left:365.5px;top:223.00px;font-family:'Liberation Sans',sans-serif;font-size:12.5px;line-height:1;font-weight:400;font-style:normal;color:#e8e8e8;white-space:pre;transform-origin:left;width:40px;text-align:center;">C</div>
<div id="t59" style="position:absolute;left:449.5px;top:223.00px;font-family:'Liberation Sans',sans-serif;font-size:12.5px;line-height:1;font-weight:400;font-style:normal;color:#e8e8e8;white-space:pre;transform-origin:left;width:40px;text-align:center;">D</div>
<div id="t60" style="position:absolute;left:539.0px;top:223.00px;font-family:'Liberation Sans',sans-serif;font-size:12.5px;line-height:1;font-weight:400;font-style:normal;color:#e8e8e8;white-space:pre;transform-origin:left;width:40px;text-align:center;">E</div>
<div id="t61" style="position:absolute;left:623.0px;top:223.00px;font-family:'Liberation Sans',sans-serif;font-size:12.5px;line-height:1;font-weight:400;font-style:normal;color:#e8e8e8;white-space:pre;transform-origin:left;width:40px;text-align:center;">F</div>
<div id="t62" style="position:absolute;left:694.0px;top:223.00px;font-family:'Liberation Sans',sans-serif;font-size:12.5px;line-height:1;font-weight:400;font-style:normal;color:#e8e8e8;white-space:pre;transform-origin:left;width:40px;text-align:center;">I</div>
<div id="t63" style="position:absolute;left:757.0px;top:223.00px;font-family:'Liberation Sans',sans-serif;font-size:12.5px;line-height:1;font-weight:400;font-style:normal;color:#e8e8e8;white-space:pre;transform-origin:left;width:40px;text-align:center;">J</div>
<div id="t64" style="position:absolute;left:821.0px;top:223.00px;font-family:'Liberation Sans',sans-serif;font-size:12.5px;line-height:1;font-weight:400;font-style:normal;color:#e8e8e8;white-space:pre;transform-origin:left;width:40px;text-align:center;">K</div>
<div id="t65" style="position:absolute;left:891.0px;top:223.00px;font-family:'Liberation Sans',sans-serif;font-size:12.5px;line-height:1;font-weight:400;font-style:normal;color:#e8e8e8;white-space:pre;transform-origin:left;width:40px;text-align:center;">L</div>
<div id="t66" style="position:absolute;left:967.0px;top:223.00px;font-family:'Liberation Sans',sans-serif;font-size:12.5px;line-height:1;font-weight:400;font-style:normal;color:#e8e8e8;white-space:pre;transform-origin:left;width:40px;text-align:center;">M</div>
<div id="t67" style="position:absolute;left:1037.0px;top:223.00px;font-family:'Liberation Sans',sans-serif;font-size:12.5px;line-height:1;font-weight:400;font-style:normal;color:#e8e8e8;white-space:pre;transform-origin:left;width:40px;text-align:center;">N</div>
<div id="t68" style="position:absolute;left:1101.0px;top:223.00px;font-family:'Liberation Sans',sans-serif;font-size:12.5px;line-height:1;font-weight:400;font-style:normal;color:#e8e8e8;white-space:pre;transform-origin:left;width:40px;text-align:center;">O</div>
<div id="t69" style="position:absolute;left:1165.0px;top:223.00px;font-family:'Liberation Sans',sans-serif;font-size:12.5px;line-height:1;font-weight:400;font-style:normal;color:#e8e8e8;white-space:pre;transform-origin:left;width:40px;text-align:center;">P</div>
<div id="t70" style="position:absolute;left:1229.0px;top:223.00px;font-family:'Liberation Sans',sans-serif;font-size:12.5px;line-height:1;font-weight:400;font-style:normal;color:#e8e8e8;white-space:pre;transform-origin:left;width:40px;text-align:center;">Q</div>
<div style="position:absolute;left:25px;top:238px;width:1233px;height:460px;background:#ffffff;"></div>
<div style="position:absolute;left:158px;top:239px;width:1px;height:23px;background:#dedede;"></div>
<div style="position:absolute;left:343px;top:239px;width:1px;height:23px;background:#dedede;"></div>
<div style="position:absolute;left:426px;top:239px;width:1px;height:23px;background:#dedede;"></div>
<div style="position:absolute;left:511px;top:239px;width:1px;height:23px;background:#dedede;"></div>
<div style="position:absolute;left:605px;top:239px;width:1px;height:23px;background:#dedede;"></div>
<div style="position:absolute;left:680px;top:239px;width:1px;height:23px;background:#dedede;"></div>
<div style="position:absolute;left:744px;top:239px;width:1px;height:23px;background:#dedede;"></div>
<div style="position:absolute;left:808px;top:239px;width:1px;height:23px;background:#dedede;"></div>
<div style="position:absolute;left:872px;top:239px;width:1px;height:23px;background:#dedede;"></div>
<div style="position:absolute;left:948px;top:239px;width:1px;height:23px;background:#dedede;"></div>
<div style="position:absolute;left:1024px;top:239px;width:1px;height:23px;background:#dedede;"></div>
<div style="position:absolute;left:1088px;top:239px;width:1px;height:23px;background:#dedede;"></div>
<div style="position:absolute;left:1152px;top:239px;width:1px;height:23px;background:#dedede;"></div>
<div style="position:absolute;left:1216px;top:239px;width:1px;height:23px;background:#dedede;"></div>
<div style="position:absolute;left:25px;top:262px;width:1233px;height:1px;background:#dedede;"></div>
<div style="position:absolute;left:343px;top:263px;width:1px;height:18px;background:#dedede;"></div>
<div style="position:absolute;left:426px;top:263px;width:1px;height:18px;background:#dedede;"></div>
<div style="position:absolute;left:511px;top:263px;width:1px;height:18px;background:#dedede;"></div>
<div style="position:absolute;left:605px;top:263px;width:1px;height:18px;background:#dedede;"></div>
<div style="position:absolute;left:680px;top:263px;width:1px;height:18px;background:#dedede;"></div>
<div style="position:absolute;left:744px;top:263px;width:1px;height:18px;background:#dedede;"></div>
<div style="position:absolute;left:808px;top:263px;width:1px;height:18px;background:#dedede;"></div>
<div style="position:absolute;left:872px;top:263px;width:1px;height:18px;background:#dedede;"></div>
<div style="position:absolute;left:948px;top:263px;width:1px;height:18px;background:#dedede;"></div>
<div style="position:absolute;left:1024px;top:263px;width:1px;height:18px;background:#dedede;"></div>
<div style="position:absolute;left:1088px;top:263px;width:1px;height:18px;background:#dedede;"></div>
<div style="position:absolute;left:1152px;top:263px;width:1px;height:18px;background:#dedede;"></div>
<div style="position:absolute;left:1216px;top:263px;width:1px;height:18px;background:#dedede;"></div>
<div style="position:absolute;left:25px;top:281px;width:1233px;height:1px;background:#dedede;"></div>
<div style="position:absolute;left:158px;top:282px;width:1px;height:18px;background:#dedede;"></div>
<div style="position:absolute;left:343px;top:282px;width:1px;height:18px;background:#dedede;"></div>
<div style="position:absolute;left:872px;top:282px;width:1px;height:18px;background:#dedede;"></div>
<div style="position:absolute;left:948px;top:282px;width:1px;height:18px;background:#dedede;"></div>
<div style="position:absolute;left:1024px;top:282px;width:1px;height:18px;background:#dedede;"></div>
<div style="position:absolute;left:1088px;top:282px;width:1px;height:18px;background:#dedede;"></div>
<div style="position:absolute;left:1152px;top:282px;width:1px;height:18px;background:#dedede;"></div>
<div style="position:absolute;left:1216px;top:282px;width:1px;height:18px;background:#dedede;"></div>
<div style="position:absolute;left:25px;top:300px;width:1233px;height:1px;background:#dedede;"></div>
<div style="position:absolute;left:158px;top:301px;width:1px;height:18px;background:#dedede;"></div>
<div style="position:absolute;left:343px;top:301px;width:1px;height:18px;background:#dedede;"></div>
<div style="position:absolute;left:426px;top:301px;width:1px;height:18px;background:#dedede;"></div>
<div style="position:absolute;left:511px;top:301px;width:1px;height:18px;background:#dedede;"></div>
<div style="position:absolute;left:605px;top:301px;width:1px;height:18px;background:#dedede;"></div>
<div style="position:absolute;left:680px;top:301px;width:1px;height:18px;background:#dedede;"></div>
<div style="position:absolute;left:744px;top:301px;width:1px;height:18px;background:#dedede;"></div>
<div style="position:absolute;left:808px;top:301px;width:1px;height:18px;background:#dedede;"></div>
<div style="position:absolute;left:872px;top:301px;width:1px;height:18px;background:#dedede;"></div>
<div style="position:absolute;left:948px;top:301px;width:1px;height:18px;background:#dedede;"></div>
<div style="position:absolute;left:1024px;top:301px;width:1px;height:18px;background:#dedede;"></div>
<div style="position:absolute;left:1088px;top:301px;width:1px;height:18px;background:#dedede;"></div>
<div style="position:absolute;left:1152px;top:301px;width:1px;height:18px;background:#dedede;"></div>
<div style="position:absolute;left:1216px;top:301px;width:1px;height:18px;background:#dedede;"></div>
<div style="position:absolute;left:25px;top:319px;width:1233px;height:1px;background:#dedede;"></div>
<div style="position:absolute;left:158px;top:320px;width:1px;height:18px;background:#dedede;"></div>
<div style="position:absolute;left:343px;top:320px;width:1px;height:18px;background:#dedede;"></div>
<div style="position:absolute;left:426px;top:320px;width:1px;height:18px;background:#dedede;"></div>
<div style="position:absolute;left:511px;top:320px;width:1px;height:18px;background:#dedede;"></div>
<div style="position:absolute;left:605px;top:320px;width:1px;height:18px;background:#dedede;"></div>
<div style="position:absolute;left:680px;top:320px;width:1px;height:18px;background:#dedede;"></div>
<div style="position:absolute;left:744px;top:320px;width:1px;height:18px;background:#dedede;"></div>
<div style="position:absolute;left:808px;top:320px;width:1px;height:18px;background:#dedede;"></div>
<div style="position:absolute;left:872px;top:320px;width:1px;height:18px;background:#dedede;"></div>
<div style="position:absolute;left:948px;top:320px;width:1px;height:18px;background:#dedede;"></div>
<div style="position:absolute;left:1024px;top:320px;width:1px;height:18px;background:#dedede;"></div>
<div style="position:absolute;left:1088px;top:320px;width:1px;height:18px;background:#dedede;"></div>
<div style="position:absolute;left:1152px;top:320px;width:1px;height:18px;background:#dedede;"></div>
<div style="position:absolute;left:1216px;top:320px;width:1px;height:18px;background:#dedede;"></div>
<div style="position:absolute;left:25px;top:338px;width:1233px;height:1px;background:#dedede;"></div>
<div style="position:absolute;left:158px;top:339px;width:1px;height:23px;background:#dedede;"></div>
<div style="position:absolute;left:343px;top:339px;width:1px;height:23px;background:#dedede;"></div>
<div style="position:absolute;left:426px;top:339px;width:1px;height:23px;background:#dedede;"></div>
<div style="position:absolute;left:511px;top:339px;width:1px;height:23px;background:#dedede;"></div>
<div style="position:absolute;left:605px;top:339px;width:1px;height:23px;background:#dedede;"></div>
<div style="position:absolute;left:680px;top:339px;width:1px;height:23px;background:#dedede;"></div>
<div style="position:absolute;left:744px;top:339px;width:1px;height:23px;background:#dedede;"></div>
<div style="position:absolute;left:808px;top:339px;width:1px;height:23px;background:#dedede;"></div>
<div style="position:absolute;left:872px;top:339px;width:1px;height:23px;background:#dedede;"></div>
<div style="position:absolute;left:948px;top:339px;width:1px;height:23px;background:#dedede;"></div>
<div style="position:absolute;left:1024px;top:339px;width:1px;height:23px;background:#dedede;"></div>
<div style="position:absolute;left:1088px;top:339px;width:1px;height:23px;background:#dedede;"></div>
<div style="position:absolute;left:1152px;top:339px;width:1px;height:23px;background:#dedede;"></div>
<div style="position:absolute;left:1216px;top:339px;width:1px;height:23px;background:#dedede;"></div>
<div style="position:absolute;left:25px;top:362px;width:1233px;height:1px;background:#dedede;"></div>
<div style="position:absolute;left:158px;top:363px;width:1px;height:18px;background:#dedede;"></div>
<div style="position:absolute;left:343px;top:363px;width:1px;height:18px;background:#dedede;"></div>
<div style="position:absolute;left:744px;top:363px;width:1px;height:18px;background:#dedede;"></div>
<div style="position:absolute;left:808px;top:363px;width:1px;height:18px;background:#dedede;"></div>
<div style="position:absolute;left:872px;top:363px;width:1px;height:18px;background:#dedede;"></div>
<div style="position:absolute;left:948px;top:363px;width:1px;height:18px;background:#dedede;"></div>
<div style="position:absolute;left:1024px;top:363px;width:1px;height:18px;background:#dedede;"></div>
<div style="position:absolute;left:1088px;top:363px;width:1px;height:18px;background:#dedede;"></div>
<div style="position:absolute;left:1152px;top:363px;width:1px;height:18px;background:#dedede;"></div>
<div style="position:absolute;left:1216px;top:363px;width:1px;height:18px;background:#dedede;"></div>
<div style="position:absolute;left:25px;top:381px;width:1233px;height:1px;background:#dedede;"></div>
<div style="position:absolute;left:158px;top:382px;width:1px;height:18px;background:#dedede;"></div>
<div style="position:absolute;left:343px;top:382px;width:1px;height:18px;background:#dedede;"></div>
<div style="position:absolute;left:605px;top:382px;width:1px;height:18px;background:#dedede;"></div>
<div style="position:absolute;left:680px;top:382px;width:1px;height:18px;background:#dedede;"></div>
<div style="position:absolute;left:744px;top:382px;width:1px;height:18px;background:#dedede;"></div>
<div style="position:absolute;left:808px;top:382px;width:1px;height:18px;background:#dedede;"></div>
<div style="position:absolute;left:872px;top:382px;width:1px;height:18px;background:#dedede;"></div>
<div style="position:absolute;left:948px;top:382px;width:1px;height:18px;background:#dedede;"></div>
<div style="position:absolute;left:1024px;top:382px;width:1px;height:18px;background:#dedede;"></div>
<div style="position:absolute;left:1088px;top:382px;width:1px;height:18px;background:#dedede;"></div>
<div style="position:absolute;left:1152px;top:382px;width:1px;height:18px;background:#dedede;"></div>
<div style="position:absolute;left:1216px;top:382px;width:1px;height:18px;background:#dedede;"></div>
<div style="position:absolute;left:25px;top:400px;width:1233px;height:1px;background:#dedede;"></div>
<div style="position:absolute;left:158px;top:401px;width:1px;height:18px;background:#dedede;"></div>
<div style="position:absolute;left:343px;top:401px;width:1px;height:18px;background:#dedede;"></div>
<div style="position:absolute;left:948px;top:401px;width:1px;height:18px;background:#dedede;"></div>
<div style="position:absolute;left:1024px;top:401px;width:1px;height:18px;background:#dedede;"></div>
<div style="position:absolute;left:1088px;top:401px;width:1px;height:18px;background:#dedede;"></div>
<div style="position:absolute;left:1152px;top:401px;width:1px;height:18px;background:#dedede;"></div>
<div style="position:absolute;left:1216px;top:401px;width:1px;height:18px;background:#dedede;"></div>
<div style="position:absolute;left:25px;top:419px;width:1233px;height:1px;background:#dedede;"></div>
<div style="position:absolute;left:158px;top:420px;width:1px;height:18px;background:#dedede;"></div>
<div style="position:absolute;left:343px;top:420px;width:1px;height:18px;background:#dedede;"></div>
<div style="position:absolute;left:25px;top:438px;width:1233px;height:1px;background:#dedede;"></div>
<div style="position:absolute;left:158px;top:439px;width:1px;height:18px;background:#dedede;"></div>
<div style="position:absolute;left:343px;top:439px;width:1px;height:18px;background:#dedede;"></div>
<div style="position:absolute;left:25px;top:457px;width:1233px;height:1px;background:#dedede;"></div>
<div style="position:absolute;left:605px;top:458px;width:1px;height:18px;background:#dedede;"></div>
<div style="position:absolute;left:680px;top:458px;width:1px;height:18px;background:#dedede;"></div>
<div style="position:absolute;left:744px;top:458px;width:1px;height:18px;background:#dedede;"></div>
<div style="position:absolute;left:808px;top:458px;width:1px;height:18px;background:#dedede;"></div>
<div style="position:absolute;left:872px;top:458px;width:1px;height:18px;background:#dedede;"></div>
<div style="position:absolute;left:948px;top:458px;width:1px;height:18px;background:#dedede;"></div>
<div style="position:absolute;left:1024px;top:458px;width:1px;height:18px;background:#dedede;"></div>
<div style="position:absolute;left:1088px;top:458px;width:1px;height:18px;background:#dedede;"></div>
<div style="position:absolute;left:1152px;top:458px;width:1px;height:18px;background:#dedede;"></div>
<div style="position:absolute;left:1216px;top:458px;width:1px;height:18px;background:#dedede;"></div>
<div style="position:absolute;left:25px;top:476px;width:1233px;height:1px;background:#dedede;"></div>
<div style="position:absolute;left:158px;top:477px;width:1px;height:18px;background:#dedede;"></div>
<div style="position:absolute;left:343px;top:477px;width:1px;height:18px;background:#dedede;"></div>
<div style="position:absolute;left:426px;top:477px;width:1px;height:18px;background:#dedede;"></div>
<div style="position:absolute;left:511px;top:477px;width:1px;height:18px;background:#dedede;"></div>
<div style="position:absolute;left:605px;top:477px;width:1px;height:18px;background:#dedede;"></div>
<div style="position:absolute;left:680px;top:477px;width:1px;height:18px;background:#dedede;"></div>
<div style="position:absolute;left:744px;top:477px;width:1px;height:18px;background:#dedede;"></div>
<div style="position:absolute;left:808px;top:477px;width:1px;height:18px;background:#dedede;"></div>
<div style="position:absolute;left:872px;top:477px;width:1px;height:18px;background:#dedede;"></div>
<div style="position:absolute;left:948px;top:477px;width:1px;height:18px;background:#dedede;"></div>
<div style="position:absolute;left:1024px;top:477px;width:1px;height:18px;background:#dedede;"></div>
<div style="position:absolute;left:1088px;top:477px;width:1px;height:18px;background:#dedede;"></div>
<div style="position:absolute;left:1152px;top:477px;width:1px;height:18px;background:#dedede;"></div>
<div style="position:absolute;left:1216px;top:477px;width:1px;height:18px;background:#dedede;"></div>
<div style="position:absolute;left:25px;top:495px;width:1233px;height:1px;background:#dedede;"></div>
<div style="position:absolute;left:158px;top:496px;width:1px;height:18px;background:#dedede;"></div>
<div style="position:absolute;left:343px;top:496px;width:1px;height:18px;background:#dedede;"></div>
<div style="position:absolute;left:426px;top:496px;width:1px;height:18px;background:#dedede;"></div>
<div style="position:absolute;left:511px;top:496px;width:1px;height:18px;background:#dedede;"></div>
<div style="position:absolute;left:605px;top:496px;width:1px;height:18px;background:#dedede;"></div>
<div style="position:absolute;left:680px;top:496px;width:1px;height:18px;background:#dedede;"></div>
<div style="position:absolute;left:744px;top:496px;width:1px;height:18px;background:#dedede;"></div>
<div style="position:absolute;left:808px;top:496px;width:1px;height:18px;background:#dedede;"></div>
<div style="position:absolute;left:872px;top:496px;width:1px;height:18px;background:#dedede;"></div>
<div style="position:absolute;left:948px;top:496px;width:1px;height:18px;background:#dedede;"></div>
<div style="position:absolute;left:1024px;top:496px;width:1px;height:18px;background:#dedede;"></div>
<div style="position:absolute;left:1088px;top:496px;width:1px;height:18px;background:#dedede;"></div>
<div style="position:absolute;left:1152px;top:496px;width:1px;height:18px;background:#dedede;"></div>
<div style="position:absolute;left:1216px;top:496px;width:1px;height:18px;background:#dedede;"></div>
<div style="position:absolute;left:25px;top:514px;width:1233px;height:1px;background:#dedede;"></div>
<div style="position:absolute;left:158px;top:515px;width:1px;height:23px;background:#dedede;"></div>
<div style="position:absolute;left:343px;top:515px;width:1px;height:23px;background:#dedede;"></div>
<div style="position:absolute;left:426px;top:515px;width:1px;height:23px;background:#dedede;"></div>
<div style="position:absolute;left:511px;top:515px;width:1px;height:23px;background:#dedede;"></div>
<div style="position:absolute;left:605px;top:515px;width:1px;height:23px;background:#dedede;"></div>
<div style="position:absolute;left:680px;top:515px;width:1px;height:23px;background:#dedede;"></div>
<div style="position:absolute;left:744px;top:515px;width:1px;height:23px;background:#dedede;"></div>
<div style="position:absolute;left:808px;top:515px;width:1px;height:23px;background:#dedede;"></div>
<div style="position:absolute;left:872px;top:515px;width:1px;height:23px;background:#dedede;"></div>
<div style="position:absolute;left:948px;top:515px;width:1px;height:23px;background:#dedede;"></div>
<div style="position:absolute;left:1024px;top:515px;width:1px;height:23px;background:#dedede;"></div>
<div style="position:absolute;left:1088px;top:515px;width:1px;height:23px;background:#dedede;"></div>
<div style="position:absolute;left:1152px;top:515px;width:1px;height:23px;background:#dedede;"></div>
<div style="position:absolute;left:1216px;top:515px;width:1px;height:23px;background:#dedede;"></div>
<div style="position:absolute;left:25px;top:538px;width:1233px;height:1px;background:#dedede;"></div>
<div style="position:absolute;left:158px;top:539px;width:1px;height:18px;background:#dedede;"></div>
<div style="position:absolute;left:343px;top:539px;width:1px;height:18px;background:#dedede;"></div>
<div style="position:absolute;left:426px;top:539px;width:1px;height:18px;background:#dedede;"></div>
<div style="position:absolute;left:511px;top:539px;width:1px;height:18px;background:#dedede;"></div>
<div style="position:absolute;left:605px;top:539px;width:1px;height:18px;background:#dedede;"></div>
<div style="position:absolute;left:680px;top:539px;width:1px;height:18px;background:#dedede;"></div>
<div style="position:absolute;left:744px;top:539px;width:1px;height:18px;background:#dedede;"></div>
<div style="position:absolute;left:808px;top:539px;width:1px;height:18px;background:#dedede;"></div>
<div style="position:absolute;left:872px;top:539px;width:1px;height:18px;background:#dedede;"></div>
<div style="position:absolute;left:948px;top:539px;width:1px;height:18px;background:#dedede;"></div>
<div style="position:absolute;left:1024px;top:539px;width:1px;height:18px;background:#dedede;"></div>
<div style="position:absolute;left:1088px;top:539px;width:1px;height:18px;background:#dedede;"></div>
<div style="position:absolute;left:1152px;top:539px;width:1px;height:18px;background:#dedede;"></div>
<div style="position:absolute;left:1216px;top:539px;width:1px;height:18px;background:#dedede;"></div>
<div style="position:absolute;left:25px;top:557px;width:1233px;height:1px;background:#dedede;"></div>
<div style="position:absolute;left:158px;top:558px;width:1px;height:18px;background:#dedede;"></div>
<div style="position:absolute;left:343px;top:558px;width:1px;height:18px;background:#dedede;"></div>
<div style="position:absolute;left:744px;top:558px;width:1px;height:18px;background:#dedede;"></div>
<div style="position:absolute;left:808px;top:558px;width:1px;height:18px;background:#dedede;"></div>
<div style="position:absolute;left:872px;top:558px;width:1px;height:18px;background:#dedede;"></div>
<div style="position:absolute;left:948px;top:558px;width:1px;height:18px;background:#dedede;"></div>
<div style="position:absolute;left:1024px;top:558px;width:1px;height:18px;background:#dedede;"></div>
<div style="position:absolute;left:1088px;top:558px;width:1px;height:18px;background:#dedede;"></div>
<div style="position:absolute;left:1152px;top:558px;width:1px;height:18px;background:#dedede;"></div>
<div style="position:absolute;left:1216px;top:558px;width:1px;height:18px;background:#dedede;"></div>
<div style="position:absolute;left:25px;top:576px;width:1233px;height:1px;background:#dedede;"></div>
<div style="position:absolute;left:158px;top:577px;width:1px;height:18px;background:#dedede;"></div>
<div style="position:absolute;left:343px;top:577px;width:1px;height:18px;background:#dedede;"></div>
<div style="position:absolute;left:426px;top:577px;width:1px;height:18px;background:#dedede;"></div>
<div style="position:absolute;left:511px;top:577px;width:1px;height:18px;background:#dedede;"></div>
<div style="position:absolute;left:605px;top:577px;width:1px;height:18px;background:#dedede;"></div>
<div style="position:absolute;left:680px;top:577px;width:1px;height:18px;background:#dedede;"></div>
<div style="position:absolute;left:744px;top:577px;width:1px;height:18px;background:#dedede;"></div>
<div style="position:absolute;left:808px;top:577px;width:1px;height:18px;background:#dedede;"></div>
<div style="position:absolute;left:872px;top:577px;width:1px;height:18px;background:#dedede;"></div>
<div style="position:absolute;left:948px;top:577px;width:1px;height:18px;background:#dedede;"></div>
<div style="position:absolute;left:1024px;top:577px;width:1px;height:18px;background:#dedede;"></div>
<div style="position:absolute;left:1088px;top:577px;width:1px;height:18px;background:#dedede;"></div>
<div style="position:absolute;left:1152px;top:577px;width:1px;height:18px;background:#dedede;"></div>
<div style="position:absolute;left:1216px;top:577px;width:1px;height:18px;background:#dedede;"></div>
<div style="position:absolute;left:25px;top:595px;width:1233px;height:1px;background:#dedede;"></div>
<div style="position:absolute;left:158px;top:596px;width:1px;height:18px;background:#dedede;"></div>
<div style="position:absolute;left:343px;top:596px;width:1px;height:18px;background:#dedede;"></div>
<div style="position:absolute;left:426px;top:596px;width:1px;height:18px;background:#dedede;"></div>
<div style="position:absolute;left:511px;top:596px;width:1px;height:18px;background:#dedede;"></div>
<div style="position:absolute;left:605px;top:596px;width:1px;height:18px;background:#dedede;"></div>
<div style="position:absolute;left:680px;top:596px;width:1px;height:18px;background:#dedede;"></div>
<div style="position:absolute;left:744px;top:596px;width:1px;height:18px;background:#dedede;"></div>
<div style="position:absolute;left:808px;top:596px;width:1px;height:18px;background:#dedede;"></div>
<div style="position:absolute;left:872px;top:596px;width:1px;height:18px;background:#dedede;"></div>
<div style="position:absolute;left:948px;top:596px;width:1px;height:18px;background:#dedede;"></div>
<div style="position:absolute;left:1024px;top:596px;width:1px;height:18px;background:#dedede;"></div>
<div style="position:absolute;left:1088px;top:596px;width:1px;height:18px;background:#dedede;"></div>
<div style="position:absolute;left:1152px;top:596px;width:1px;height:18px;background:#dedede;"></div>
<div style="position:absolute;left:1216px;top:596px;width:1px;height:18px;background:#dedede;"></div>
<div style="position:absolute;left:25px;top:614px;width:1233px;height:1px;background:#dedede;"></div>
<div style="position:absolute;left:158px;top:615px;width:1px;height:18px;background:#dedede;"></div>
<div style="position:absolute;left:343px;top:615px;width:1px;height:18px;background:#dedede;"></div>
<div style="position:absolute;left:426px;top:615px;width:1px;height:18px;background:#dedede;"></div>
<div style="position:absolute;left:511px;top:615px;width:1px;height:18px;background:#dedede;"></div>
<div style="position:absolute;left:605px;top:615px;width:1px;height:18px;background:#dedede;"></div>
<div style="position:absolute;left:680px;top:615px;width:1px;height:18px;background:#dedede;"></div>
<div style="position:absolute;left:744px;top:615px;width:1px;height:18px;background:#dedede;"></div>
<div style="position:absolute;left:808px;top:615px;width:1px;height:18px;background:#dedede;"></div>
<div style="position:absolute;left:872px;top:615px;width:1px;height:18px;background:#dedede;"></div>
<div style="position:absolute;left:948px;top:615px;width:1px;height:18px;background:#dedede;"></div>
<div style="position:absolute;left:1024px;top:615px;width:1px;height:18px;background:#dedede;"></div>
<div style="position:absolute;left:1088px;top:615px;width:1px;height:18px;background:#dedede;"></div>
<div style="position:absolute;left:1152px;top:615px;width:1px;height:18px;background:#dedede;"></div>
<div style="position:absolute;left:1216px;top:615px;width:1px;height:18px;background:#dedede;"></div>
<div style="position:absolute;left:25px;top:633px;width:1233px;height:1px;background:#dedede;"></div>
<div style="position:absolute;left:158px;top:634px;width:1px;height:19px;background:#dedede;"></div>
<div style="position:absolute;left:343px;top:634px;width:1px;height:19px;background:#dedede;"></div>
<div style="position:absolute;left:426px;top:634px;width:1px;height:19px;background:#dedede;"></div>
<div style="position:absolute;left:511px;top:634px;width:1px;height:19px;background:#dedede;"></div>
<div style="position:absolute;left:605px;top:634px;width:1px;height:19px;background:#dedede;"></div>
<div style="position:absolute;left:680px;top:634px;width:1px;height:19px;background:#dedede;"></div>
<div style="position:absolute;left:744px;top:634px;width:1px;height:19px;background:#dedede;"></div>
<div style="position:absolute;left:808px;top:634px;width:1px;height:19px;background:#dedede;"></div>
<div style="position:absolute;left:872px;top:634px;width:1px;height:19px;background:#dedede;"></div>
<div style="position:absolute;left:948px;top:634px;width:1px;height:19px;background:#dedede;"></div>
<div style="position:absolute;left:1024px;top:634px;width:1px;height:19px;background:#dedede;"></div>
<div style="position:absolute;left:1088px;top:634px;width:1px;height:19px;background:#dedede;"></div>
<div style="position:absolute;left:1152px;top:634px;width:1px;height:19px;background:#dedede;"></div>
<div style="position:absolute;left:1216px;top:634px;width:1px;height:19px;background:#dedede;"></div>
<div style="position:absolute;left:25px;top:653px;width:1233px;height:1px;background:#dedede;"></div>
<div style="position:absolute;left:158px;top:654px;width:1px;height:18px;background:#dedede;"></div>
<div style="position:absolute;left:343px;top:654px;width:1px;height:18px;background:#dedede;"></div>
<div style="position:absolute;left:426px;top:654px;width:1px;height:18px;background:#dedede;"></div>
<div style="position:absolute;left:511px;top:654px;width:1px;height:18px;background:#dedede;"></div>
<div style="position:absolute;left:605px;top:654px;width:1px;height:18px;background:#dedede;"></div>
<div style="position:absolute;left:680px;top:654px;width:1px;height:18px;background:#dedede;"></div>
<div style="position:absolute;left:744px;top:654px;width:1px;height:18px;background:#dedede;"></div>
<div style="position:absolute;left:808px;top:654px;width:1px;height:18px;background:#dedede;"></div>
<div style="position:absolute;left:872px;top:654px;width:1px;height:18px;background:#dedede;"></div>
<div style="position:absolute;left:948px;top:654px;width:1px;height:18px;background:#dedede;"></div>
<div style="position:absolute;left:1024px;top:654px;width:1px;height:18px;background:#dedede;"></div>
<div style="position:absolute;left:1088px;top:654px;width:1px;height:18px;background:#dedede;"></div>
<div style="position:absolute;left:1152px;top:654px;width:1px;height:18px;background:#dedede;"></div>
<div style="position:absolute;left:1216px;top:654px;width:1px;height:18px;background:#dedede;"></div>
<div style="position:absolute;left:25px;top:672px;width:1233px;height:1px;background:#dedede;"></div>
<div style="position:absolute;left:158px;top:673px;width:1px;height:18px;background:#dedede;"></div>
<div style="position:absolute;left:343px;top:673px;width:1px;height:18px;background:#dedede;"></div>
<div style="position:absolute;left:426px;top:673px;width:1px;height:18px;background:#dedede;"></div>
<div style="position:absolute;left:511px;top:673px;width:1px;height:18px;background:#dedede;"></div>
<div style="position:absolute;left:605px;top:673px;width:1px;height:18px;background:#dedede;"></div>
<div style="position:absolute;left:680px;top:673px;width:1px;height:18px;background:#dedede;"></div>
<div style="position:absolute;left:744px;top:673px;width:1px;height:18px;background:#dedede;"></div>
<div style="position:absolute;left:808px;top:673px;width:1px;height:18px;background:#dedede;"></div>
<div style="position:absolute;left:872px;top:673px;width:1px;height:18px;background:#dedede;"></div>
<div style="position:absolute;left:948px;top:673px;width:1px;height:18px;background:#dedede;"></div>
<div style="position:absolute;left:1024px;top:673px;width:1px;height:18px;background:#dedede;"></div>
<div style="position:absolute;left:1088px;top:673px;width:1px;height:18px;background:#dedede;"></div>
<div style="position:absolute;left:1152px;top:673px;width:1px;height:18px;background:#dedede;"></div>
<div style="position:absolute;left:1216px;top:673px;width:1px;height:18px;background:#dedede;"></div>
<div style="position:absolute;left:25px;top:691px;width:1233px;height:1px;background:#dedede;"></div>
<div style="position:absolute;left:158px;top:692px;width:1px;height:6px;background:#dedede;"></div>
<div style="position:absolute;left:343px;top:692px;width:1px;height:6px;background:#dedede;"></div>
<div style="position:absolute;left:426px;top:692px;width:1px;height:6px;background:#dedede;"></div>
<div style="position:absolute;left:511px;top:692px;width:1px;height:6px;background:#dedede;"></div>
<div style="position:absolute;left:605px;top:692px;width:1px;height:6px;background:#dedede;"></div>
<div style="position:absolute;left:680px;top:692px;width:1px;height:6px;background:#dedede;"></div>
<div style="position:absolute;left:744px;top:692px;width:1px;height:6px;background:#dedede;"></div>
<div style="position:absolute;left:808px;top:692px;width:1px;height:6px;background:#dedede;"></div>
<div style="position:absolute;left:872px;top:692px;width:1px;height:6px;background:#dedede;"></div>
<div style="position:absolute;left:948px;top:692px;width:1px;height:6px;background:#dedede;"></div>
<div style="position:absolute;left:1024px;top:692px;width:1px;height:6px;background:#dedede;"></div>
<div style="position:absolute;left:1088px;top:692px;width:1px;height:6px;background:#dedede;"></div>
<div style="position:absolute;left:1152px;top:692px;width:1px;height:6px;background:#dedede;"></div>
<div style="position:absolute;left:1216px;top:692px;width:1px;height:6px;background:#dedede;"></div>
<div style="position:absolute;left:0px;top:238px;width:24px;height:24px;background:#5f5f5f;"></div>
<div style="position:absolute;left:0px;top:238px;width:24px;height:1px;background:#a8a8a8;"></div>
<div id="t71" style="position:absolute;left:0px;top:247.50px;font-family:'Liberation Sans',sans-serif;font-size:12.5px;line-height:1;font-weight:400;font-style:normal;color:#ececec;white-space:pre;transform-origin:left;width:24px;text-align:center;">1</div>
<div style="position:absolute;left:0px;top:262px;width:24px;height:19px;background:#5f5f5f;"></div>
<div style="position:absolute;left:0px;top:262px;width:24px;height:1px;background:#a8a8a8;"></div>
<div id="t72" style="position:absolute;left:0px;top:266.50px;font-family:'Liberation Sans',sans-serif;font-size:12.5px;line-height:1;font-weight:400;font-style:normal;color:#ececec;white-space:pre;transform-origin:left;width:24px;text-align:center;">2</div>
<div style="position:absolute;left:0px;top:281px;width:24px;height:19px;background:#5f5f5f;"></div>
<div style="position:absolute;left:0px;top:281px;width:24px;height:1px;background:#a8a8a8;"></div>
<div id="t73" style="position:absolute;left:0px;top:285.50px;font-family:'Liberation Sans',sans-serif;font-size:12.5px;line-height:1;font-weight:400;font-style:normal;color:#ececec;white-space:pre;transform-origin:left;width:24px;text-align:center;">3</div>
<div style="position:absolute;left:0px;top:300px;width:24px;height:19px;background:#5f5f5f;"></div>
<div style="position:absolute;left:0px;top:300px;width:24px;height:1px;background:#a8a8a8;"></div>
<div id="t74" style="position:absolute;left:0px;top:304.50px;font-family:'Liberation Sans',sans-serif;font-size:12.5px;line-height:1;font-weight:400;font-style:normal;color:#ececec;white-space:pre;transform-origin:left;width:24px;text-align:center;">4</div>
<div style="position:absolute;left:0px;top:319px;width:24px;height:19px;background:#5f5f5f;"></div>
<div style="position:absolute;left:0px;top:319px;width:24px;height:1px;background:#a8a8a8;"></div>
<div id="t75" style="position:absolute;left:0px;top:323.50px;font-family:'Liberation Sans',sans-serif;font-size:12.5px;line-height:1;font-weight:400;font-style:normal;color:#ececec;white-space:pre;transform-origin:left;width:24px;text-align:center;">5</div>
<div style="position:absolute;left:0px;top:338px;width:24px;height:24px;background:#5f5f5f;"></div>
<div style="position:absolute;left:0px;top:338px;width:24px;height:1px;background:#a8a8a8;"></div>
<div id="t76" style="position:absolute;left:0px;top:347.50px;font-family:'Liberation Sans',sans-serif;font-size:12.5px;line-height:1;font-weight:400;font-style:normal;color:#ececec;white-space:pre;transform-origin:left;width:24px;text-align:center;">6</div>
<div style="position:absolute;left:0px;top:362px;width:24px;height:19px;background:#5f5f5f;"></div>
<div style="position:absolute;left:0px;top:362px;width:24px;height:1px;background:#a8a8a8;"></div>
<div id="t77" style="position:absolute;left:0px;top:366.50px;font-family:'Liberation Sans',sans-serif;font-size:12.5px;line-height:1;font-weight:400;font-style:normal;color:#ececec;white-space:pre;transform-origin:left;width:24px;text-align:center;">7</div>
<div style="position:absolute;left:0px;top:381px;width:24px;height:19px;background:#5f5f5f;"></div>
<div style="position:absolute;left:0px;top:381px;width:24px;height:1px;background:#a8a8a8;"></div>
<div id="t78" style="position:absolute;left:0px;top:385.50px;font-family:'Liberation Sans',sans-serif;font-size:12.5px;line-height:1;font-weight:400;font-style:normal;color:#ececec;white-space:pre;transform-origin:left;width:24px;text-align:center;">8</div>
<div style="position:absolute;left:0px;top:400px;width:24px;height:19px;background:#5f5f5f;"></div>
<div style="position:absolute;left:0px;top:400px;width:24px;height:1px;background:#a8a8a8;"></div>
<div id="t79" style="position:absolute;left:0px;top:404.50px;font-family:'Liberation Sans',sans-serif;font-size:12.5px;line-height:1;font-weight:400;font-style:normal;color:#ececec;white-space:pre;transform-origin:left;width:24px;text-align:center;">9</div>
<div style="position:absolute;left:0px;top:419px;width:24px;height:19px;background:#0d0d0d;"></div>
<div style="position:absolute;left:0px;top:419px;width:24px;height:1px;background:#3c3c3c;"></div>
<div id="t80" style="position:absolute;left:0px;top:423.50px;font-family:'Liberation Sans',sans-serif;font-size:12.5px;line-height:1;font-weight:400;font-style:normal;color:#d8d8d8;white-space:pre;transform-origin:left;width:24px;text-align:center;">10</div>
<div style="position:absolute;left:0px;top:438px;width:24px;height:19px;background:#0d0d0d;"></div>
<div style="position:absolute;left:0px;top:438px;width:24px;height:1px;background:#3c3c3c;"></div>
<div id="t81" style="position:absolute;left:0px;top:442.50px;font-family:'Liberation Sans',sans-serif;font-size:12.5px;line-height:1;font-weight:400;font-style:normal;color:#d8d8d8;white-space:pre;transform-origin:left;width:24px;text-align:center;">11</div>
<div style="position:absolute;left:0px;top:457px;width:24px;height:19px;background:#0d0d0d;"></div>
<div style="position:absolute;left:0px;top:457px;width:24px;height:1px;background:#3c3c3c;"></div>
<div id="t82" style="position:absolute;left:0px;top:461.50px;font-family:'Liberation Sans',sans-serif;font-size:12.5px;line-height:1;font-weight:400;font-style:normal;color:#d8d8d8;white-space:pre;transform-origin:left;width:24px;text-align:center;">12</div>
<div style="position:absolute;left:0px;top:476px;width:24px;height:19px;background:#0d0d0d;"></div>
<div style="position:absolute;left:0px;top:476px;width:24px;height:1px;background:#3c3c3c;"></div>
<div id="t83" style="position:absolute;left:0px;top:480.50px;font-family:'Liberation Sans',sans-serif;font-size:12.5px;line-height:1;font-weight:400;font-style:normal;color:#d8d8d8;white-space:pre;transform-origin:left;width:24px;text-align:center;">13</div>
<div style="position:absolute;left:0px;top:495px;width:24px;height:19px;background:#0d0d0d;"></div>
<div style="position:absolute;left:0px;top:495px;width:24px;height:1px;background:#3c3c3c;"></div>
<div id="t84" style="position:absolute;left:0px;top:499.50px;font-family:'Liberation Sans',sans-serif;font-size:12.5px;line-height:1;font-weight:400;font-style:normal;color:#d8d8d8;white-space:pre;transform-origin:left;width:24px;text-align:center;">14</div>
<div style="position:absolute;left:0px;top:514px;width:24px;height:24px;background:#0d0d0d;"></div>
<div style="position:absolute;left:0px;top:514px;width:24px;height:1px;background:#3c3c3c;"></div>
<div id="t85" style="position:absolute;left:0px;top:523.50px;font-family:'Liberation Sans',sans-serif;font-size:12.5px;line-height:1;font-weight:400;font-style:normal;color:#d8d8d8;white-space:pre;transform-origin:left;width:24px;text-align:center;">15</div>
<div style="position:absolute;left:0px;top:538px;width:24px;height:19px;background:#0d0d0d;"></div>
<div style="position:absolute;left:0px;top:538px;width:24px;height:1px;background:#3c3c3c;"></div>
<div id="t86" style="position:absolute;left:0px;top:542.50px;font-family:'Liberation Sans',sans-serif;font-size:12.5px;line-height:1;font-weight:400;font-style:normal;color:#d8d8d8;white-space:pre;transform-origin:left;width:24px;text-align:center;">16</div>
<div style="position:absolute;left:0px;top:557px;width:24px;height:19px;background:#0d0d0d;"></div>
<div style="position:absolute;left:0px;top:557px;width:24px;height:1px;background:#3c3c3c;"></div>
<div id="t87" style="position:absolute;left:0px;top:561.50px;font-family:'Liberation Sans',sans-serif;font-size:12.5px;line-height:1;font-weight:400;font-style:normal;color:#d8d8d8;white-space:pre;transform-origin:left;width:24px;text-align:center;">17</div>
<div style="position:absolute;left:0px;top:576px;width:24px;height:19px;background:#0d0d0d;"></div>
<div style="position:absolute;left:0px;top:576px;width:24px;height:1px;background:#3c3c3c;"></div>
<div id="t88" style="position:absolute;left:0px;top:580.50px;font-family:'Liberation Sans',sans-serif;font-size:12.5px;line-height:1;font-weight:400;font-style:normal;color:#d8d8d8;white-space:pre;transform-origin:left;width:24px;text-align:center;">18</div>
<div style="position:absolute;left:0px;top:595px;width:24px;height:19px;background:#0d0d0d;"></div>
<div style="position:absolute;left:0px;top:595px;width:24px;height:1px;background:#3c3c3c;"></div>
<div id="t89" style="position:absolute;left:0px;top:599.50px;font-family:'Liberation Sans',sans-serif;font-size:12.5px;line-height:1;font-weight:400;font-style:normal;color:#d8d8d8;white-space:pre;transform-origin:left;width:24px;text-align:center;">19</div>
<div style="position:absolute;left:0px;top:614px;width:24px;height:19px;background:#0d0d0d;"></div>
<div style="position:absolute;left:0px;top:614px;width:24px;height:1px;background:#3c3c3c;"></div>
<div id="t90" style="position:absolute;left:0px;top:618.50px;font-family:'Liberation Sans',sans-serif;font-size:12.5px;line-height:1;font-weight:400;font-style:normal;color:#d8d8d8;white-space:pre;transform-origin:left;width:24px;text-align:center;">20</div>
<div style="position:absolute;left:0px;top:633px;width:24px;height:20px;background:#0d0d0d;"></div>
<div style="position:absolute;left:0px;top:633px;width:24px;height:1px;background:#3c3c3c;"></div>
<div id="t91" style="position:absolute;left:0px;top:638.50px;font-family:'Liberation Sans',sans-serif;font-size:12.5px;line-height:1;font-weight:400;font-style:normal;color:#d8d8d8;white-space:pre;transform-origin:left;width:24px;text-align:center;">21</div>
<div style="position:absolute;left:0px;top:653px;width:24px;height:19px;background:#0d0d0d;"></div>
<div style="position:absolute;left:0px;top:653px;width:24px;height:1px;background:#3c3c3c;"></div>
<div id="t92" style="position:absolute;left:0px;top:657.50px;font-family:'Liberation Sans',sans-serif;font-size:12.5px;line-height:1;font-weight:400;font-style:normal;color:#d8d8d8;white-space:pre;transform-origin:left;width:24px;text-align:center;">22</div>
<div style="position:absolute;left:0px;top:672px;width:24px;height:19px;background:#0d0d0d;"></div>
<div style="position:absolute;left:0px;top:672px;width:24px;height:1px;background:#3c3c3c;"></div>
<div id="t93" style="position:absolute;left:0px;top:676.50px;font-family:'Liberation Sans',sans-serif;font-size:12.5px;line-height:1;font-weight:400;font-style:normal;color:#d8d8d8;white-space:pre;transform-origin:left;width:24px;text-align:center;">23</div>
<div style="position:absolute;left:0px;top:691px;width:24px;height:7px;background:#0d0d0d;"></div>
<div style="position:absolute;left:0px;top:691px;width:24px;height:1px;background:#3c3c3c;"></div>
<div id="t94" style="position:absolute;left:0px;top:696.50px;font-family:'Liberation Sans',sans-serif;font-size:12.5px;line-height:1;font-weight:400;font-style:normal;color:#d8d8d8;white-space:pre;transform-origin:left;width:24px;text-align:center;">24</div>
<div style="position:absolute;left:24px;top:238px;width:1px;height:460px;background:#0d0d0d;"></div>
<div style="position:absolute;left:24px;top:238px;width:1px;height:181px;background:#5f5f5f;"></div>
<div style="position:absolute;left:25px;top:282px;width:134px;height:18px;background:#ffc000;"></div>
<div style="position:absolute;left:25px;top:382px;width:134px;height:18px;background:#ffc000;"></div>
<div style="position:absolute;left:25px;top:401px;width:134px;height:18px;background:#ffc000;"></div>
<div style="position:absolute;left:25px;top:420px;width:134px;height:18px;background:#ffc000;"></div>
<div style="position:absolute;left:25px;top:439px;width:134px;height:18px;background:#ffc000;"></div>
<div style="position:absolute;left:25px;top:596px;width:133px;height:18px;background:#ffc000;"></div>
<div style="position:absolute;left:158px;top:596px;width:186px;height:18px;background:#ebebd2;"></div>
<div style="position:absolute;left:25px;top:615px;width:133px;height:18px;background:#ffc000;"></div>
<div style="position:absolute;left:158px;top:615px;width:186px;height:18px;background:#ebebd2;"></div>
<div style="position:absolute;left:25px;top:634px;width:133px;height:19px;background:#ffc000;"></div>
<div style="position:absolute;left:158px;top:634px;width:186px;height:19px;background:#ebebd2;"></div>
<div style="position:absolute;left:25px;top:654px;width:133px;height:18px;background:#ffc000;"></div>
<div style="position:absolute;left:158px;top:654px;width:186px;height:18px;background:#ebebd2;"></div>
<div style="position:absolute;left:25px;top:673px;width:133px;height:18px;background:#ffc000;"></div>
<div style="position:absolute;left:158px;top:673px;width:186px;height:18px;background:#ebebd2;"></div>
<div style="position:absolute;left:25px;top:692px;width:133px;height:6px;background:#ffc000;"></div>
<div style="position:absolute;left:158px;top:692px;width:186px;height:6px;background:#ebebd2;"></div>
<div style="position:absolute;left:25px;top:281px;width:134px;height:1px;background:#000;"></div>
<div style="position:absolute;left:25px;top:300px;width:134px;height:1px;background:#000;"></div>
<div style="position:absolute;left:25px;top:381px;width:134px;height:1px;background:#000;"></div>
<div style="position:absolute;left:25px;top:400px;width:134px;height:1px;background:#000;"></div>
<div style="position:absolute;left:25px;top:419px;width:134px;height:1px;background:#000;"></div>
<div style="position:absolute;left:25px;top:438px;width:134px;height:1px;background:#000;"></div>
<div style="position:absolute;left:25px;top:457px;width:134px;height:1px;background:#000;"></div>
<div style="position:absolute;left:25px;top:595px;width:655px;height:1px;background:#000;"></div>
<div style="position:absolute;left:25px;top:614px;width:319px;height:1px;background:#000;"></div>
<div style="position:absolute;left:25px;top:633px;width:319px;height:1px;background:#000;"></div>
<div style="position:absolute;left:25px;top:653px;width:319px;height:1px;background:#000;"></div>
<div style="position:absolute;left:25px;top:672px;width:319px;height:1px;background:#000;"></div>
<div style="position:absolute;left:25px;top:691px;width:319px;height:1px;background:#000;"></div>
<div style="position:absolute;left:25px;top:238px;width:1px;height:181px;background:#1f7a47;"></div>
<div style="position:absolute;left:25px;top:457px;width:1px;height:139px;background:#8c8c8c;"></div>
<div style="position:absolute;left:25px;top:419px;width:1px;height:38px;background:#ffd766;"></div>
<div style="position:absolute;left:25px;top:596px;width:1px;height:102px;background:#ffd766;"></div>
<div id="t95" style="position:absolute;left:29.4px;top:243.80px;font-family:'Liberation Sans',sans-serif;font-size:16px;line-height:1;font-weight:700;font-style:normal;color:#141414;white-space:pre;transform-origin:left;transform:scaleX(0.9893);">Step 1</div>
<div id="t96" style="position:absolute;left:28.5px;top:266.75px;font-family:'Liberation Sans',sans-serif;font-size:12.5px;line-height:1;font-weight:400;font-style:italic;color:#202020;white-space:pre;transform-origin:left;transform:scaleX(0.9002);text-decoration:underline;text-decoration-thickness:1px;text-underline-offset:1px;">enter values in orange cells</div>
<div id="t97" style="position:absolute;left:33px;top:284.80px;font-family:'Liberation Sans',sans-serif;font-size:13.5px;line-height:1;font-weight:400;font-style:normal;color:#141414;white-space:pre;transform-origin:left;transform:scaleX(0.8249);">$</div>
<div id="t98" style="position:absolute;right:1129.5px;top:284.80px;font-family:'Liberation Sans',sans-serif;font-size:13px;line-height:1;font-weight:400;font-style:normal;color:#141414;white-space:pre;transform-origin:right;transform:scaleX(0.9727);">462,995.98</div>
<div id="t99" style="position:absolute;left:161.25px;top:285.40px;font-family:'Liberation Sans',sans-serif;font-size:13px;line-height:1;font-weight:700;font-style:normal;color:#141414;white-space:pre;transform-origin:left;transform:scaleX(0.9949);">Total Sales in NC</div>
<div id="t100" style="position:absolute;left:346.3px;top:285.20px;font-family:'Liberation Sans',sans-serif;font-size:13.5px;line-height:1;font-weight:400;font-style:italic;color:#141414;white-space:pre;transform-origin:left;transform:scaleX(1.0059);">Enter the total amount of gross sales/receipts in all NC. Do not include tax collected.</div>
<div id="t101" style="position:absolute;left:32px;top:304.50px;font-family:'Liberation Sans',sans-serif;font-size:12.5px;line-height:1;font-weight:700;font-style:normal;color:#cc1a22;white-space:pre;transform-origin:left;transform:scaleX(0.9061);">$</div>
<div id="t102" style="position:absolute;right:1142px;top:304.50px;font-family:'Liberation Sans',sans-serif;font-size:12.5px;line-height:1;font-weight:700;font-style:normal;color:#cc1a22;white-space:pre;transform-origin:right;transform:scaleX(0.9588);">-</div>
<div id="t103" style="position:absolute;left:161.25px;top:304.20px;font-family:'Liberation Serif',serif;font-size:13px;line-height:1;font-weight:700;font-style:italic;color:#cc1a22;white-space:pre;transform-origin:left;transform:scaleX(1.0306);">sum of Total Sales by Tax Rates</div>
<div id="t104" style="position:absolute;left:32px;top:323.70px;font-family:'Liberation Sans',sans-serif;font-size:12.5px;line-height:1;font-weight:700;font-style:normal;color:#cc1a22;white-space:pre;transform-origin:left;transform:scaleX(0.9061);">$</div>
<div id="t105" style="position:absolute;right:1128.7px;top:322.70px;font-family:'Liberation Serif',serif;font-size:13.5px;line-height:1;font-weight:400;font-style:normal;color:#cc1a22;white-space:pre;transform-origin:right;transform:scaleX(1.0370);">462,995.98</div>
<div id="t106" style="position:absolute;left:161.25px;top:323.20px;font-family:'Liberation Serif',serif;font-size:13px;line-height:1;font-weight:700;font-style:italic;color:#cc1a22;white-space:pre;transform-origin:left;transform:scaleX(1.0157);">difference</div>
<div id="t107" style="position:absolute;left:29.7px;top:343.80px;font-family:'Liberation Sans',sans-serif;font-size:16px;line-height:1;font-weight:700;font-style:normal;color:#141414;white-space:pre;transform-origin:left;transform:scaleX(0.9955);">Step 2</div>
<div id="t108" style="position:absolute;left:161.25px;top:346.05px;font-family:'Liberation Sans',sans-serif;font-size:13px;line-height:1;font-weight:700;font-style:normal;color:#141414;white-space:pre;transform-origin:left;transform:scaleX(0.9865);text-decoration:underline;text-decoration-thickness:1px;text-underline-offset:1px;">Total Sales by Tax Rates</div>
<div id="t109" style="position:absolute;left:346.2px;top:365.80px;font-family:'Liberation Sans',sans-serif;font-size:13.5px;line-height:1;font-weight:400;font-style:italic;color:#141414;white-space:pre;transform-origin:left;transform:scaleX(1.0011);">Enter the total amount of gross sales/receipts that were...</div>
<div id="t110" style="position:absolute;left:161.3px;top:384.60px;font-family:'Liberation Sans',sans-serif;font-size:13.5px;line-height:1;font-weight:400;font-style:normal;color:#141414;white-space:pre;transform-origin:left;transform:scaleX(0.9731);">Sales for Resale</div>
<div id="t111" style="position:absolute;left:346.2px;top:384.80px;font-family:'Liberation Sans',sans-serif;font-size:13.5px;line-height:1;font-weight:400;font-style:italic;color:#141414;white-space:pre;transform-origin:left;transform:scaleX(1.0216);">Items sold for resale, sublease, or subrent</div>
<div id="t112" style="position:absolute;left:161.3px;top:404.50px;font-family:'Liberation Sans',sans-serif;font-size:13.5px;line-height:1;font-weight:400;font-style:normal;color:#141414;white-space:pre;transform-origin:left;transform:scaleX(0.9543);">0% - Tax Emept</div>
<div id="t113" style="position:absolute;left:346.2px;top:404.30px;font-family:'Liberation Sans',sans-serif;font-size:13.5px;line-height:1;font-weight:400;font-style:italic;color:#141414;white-space:pre;transform-origin:left;transform:scaleX(1.0064);">Tax exempt (original agricultural goods produced by you, i.e. eggs, milk, raw produce, educational tours)</div>
<div id="t114" style="position:absolute;left:161.3px;top:423.30px;font-family:'Liberation Sans',sans-serif;font-size:13.5px;line-height:1;font-weight:400;font-style:normal;color:#141414;white-space:pre;transform-origin:left;transform:scaleX(0.9643);">2% - Food Tax</div>
<div id="t115" style="position:absolute;left:346.2px;top:423.30px;font-family:'Liberation Sans',sans-serif;font-size:13.5px;line-height:1;font-weight:400;font-style:italic;color:#141414;white-space:pre;transform-origin:left;transform:scaleX(1.0011);">Subject to Food Tax (original agricultural goods  </div>
<div id="t116" style="position:absolute;left:635.7px;top:423.30px;font-family:'Liberation Sans',sans-serif;font-size:13.5px;line-height:1;font-weight:400;font-style:italic;color:#141414;white-space:pre;transform-origin:left;transform:scaleX(1.0104);text-decoration:underline;text-decoration-thickness:1px;text-underline-offset:1px;">you bought from someone else</div>
<div id="t117" style="position:absolute;left:826.9px;top:423.30px;font-family:'Liberation Sans',sans-serif;font-size:13.5px;line-height:1;font-weight:400;font-style:italic;color:#141414;white-space:pre;transform-origin:left;transform:scaleX(1.0203);">, processed raw meats, secondary dairy, food items bought at full retail</div>
<div id="t118" style="position:absolute;left:161.3px;top:442.10px;font-family:'Liberation Sans',sans-serif;font-size:13.5px;line-height:1;font-weight:400;font-style:normal;color:#141414;white-space:pre;transform-origin:left;transform:scaleX(1.0262);">Full retail (state + local)</div>
<div id="t119" style="position:absolute;left:346.2px;top:442.10px;font-family:'Liberation Sans',sans-serif;font-size:13.5px;line-height:1;font-weight:400;font-style:italic;color:#141414;white-space:pre;transform-origin:left;transform:scaleX(1.0021);">Subject to Full Retail (general non-food items, foods that have been prepared in some way: combined/spiced, heated or arranged (inc. flower arrangemen</div>
<div id="t120" style="position:absolute;left:29px;top:461.80px;font-family:'Liberation Serif',serif;font-size:13.5px;line-height:1;font-weight:700;font-style:normal;color:#cc1a22;white-space:pre;transform-origin:left;transform:scaleX(1.0439);">The sum of Total Sales by Tax Rates does not match the value entered for Total Sales in NC</div>
<div id="t121" style="position:absolute;left:29.5px;top:520.00px;font-family:'Liberation Sans',sans-serif;font-size:16px;line-height:1;font-weight:700;font-style:normal;color:#141414;white-space:pre;transform-origin:left;transform:scaleX(0.9955);">Step 3</div>
<div id="t122" style="position:absolute;left:161.25px;top:561.20px;font-family:'Liberation Sans',sans-serif;font-size:13px;line-height:1;font-weight:700;font-style:normal;color:#141414;white-space:pre;transform-origin:left;transform:scaleX(0.9967);text-decoration:underline;text-decoration-thickness:1px;text-underline-offset:1px;">Total Sales by County</div>
<div id="t123" style="position:absolute;left:346.2px;top:561.20px;font-family:'Liberation Sans',sans-serif;font-size:13.5px;line-height:1;font-weight:400;font-style:italic;color:#141414;white-space:pre;transform-origin:left;transform:scaleX(1.0025);">Enter the total amount of sales by county. Rates will auto-populate.</div>
<div id="t124" style="position:absolute;left:161.25px;top:580.00px;font-family:'Liberation Sans',sans-serif;font-size:13.5px;line-height:1;font-weight:400;font-style:normal;color:#141414;white-space:pre;transform-origin:left;transform:scaleX(0.9584);">County</div>
<div id="t125" style="position:absolute;left:206.25px;top:582.00px;font-family:'Liberation Sans',sans-serif;font-size:11.5px;line-height:1;font-weight:400;font-style:italic;color:#262626;white-space:pre;transform-origin:left;transform:scaleX(1.0130);">(enter below)</div>
<div id="t126" style="position:absolute;left:346.4px;top:580.00px;font-family:'Liberation Sans',sans-serif;font-size:13.5px;line-height:1;font-weight:400;font-style:normal;color:#8a8a8a;white-space:pre;transform-origin:left;transform:scaleX(0.9594);">County Rate</div>
<div id="t127" style="position:absolute;left:429.5px;top:580.00px;font-family:'Liberation Sans',sans-serif;font-size:13.5px;line-height:1;font-weight:400;font-style:normal;color:#8a8a8a;white-space:pre;transform-origin:left;transform:scaleX(1.0133);">Transit Rate</div>
<div id="t128" style="position:absolute;left:514px;top:580.00px;font-family:'Liberation Sans',sans-serif;font-size:13.5px;line-height:1;font-weight:400;font-style:normal;color:#8a8a8a;white-space:pre;transform-origin:left;transform:scaleX(0.9880);">Tax for County</div>
<div id="t129" style="position:absolute;left:608px;top:580.00px;font-family:'Liberation Sans',sans-serif;font-size:13.5px;line-height:1;font-weight:400;font-style:normal;color:#8a8a8a;white-space:pre;transform-origin:left;transform:scaleX(1.0263);">Transit Tax</div>
<div style="position:absolute;left:1258px;top:218px;width:22px;height:480px;background:#141414;"></div>
<div style="position:absolute;left:1234px;top:423px;width:22px;height:21px;background:#ffffff;border:1px solid #c8c8c8;"></div>
<svg style="position:absolute;left:1237px;top:426px;" width="17" height="15" viewBox="0 0 17 15" fill="none">
<rect x="4.5" y="4.5" width="11" height="9" stroke="#444" stroke-width="1.2"/>
<rect x="7" y="8" width="7" height="3.5" stroke="#444" stroke-width="1"/>
<path d="M5 1 L1.5 6 H4 L2 10" stroke="#f08020" stroke-width="1.6"/>
</svg>
<svg style="position:absolute;left:1264px;top:223px;" width="11" height="8" viewBox="0 0 11 8" fill="none"><path d="M0.5 7.5 L5.5 0.5 L10.5 7.5 Z" fill="#9a9a9a"/></svg>
<div style="position:absolute;left:1265px;top:236px;width:10px;height:86px;background:#9a9a9a;border-radius:5px;"></div>
<svg style="position:absolute;left:1264px;top:689px;" width="11" height="7" viewBox="0 0 11 7" fill="none"><path d="M0.5 0.5 L5.5 6.5 L10.5 0.5 Z" fill="#9a9a9a"/></svg>
<div style="position:absolute;left:0px;top:698px;width:1280px;height:32px;background:#121410;"></div>
<div style="position:absolute;left:108px;top:698px;width:94px;height:10px;background:#ffffff;"></div>
<div style="position:absolute;left:0px;top:698px;width:116px;height:32px;background:#121410;border-top-right-radius:6px;"></div>
<div style="position:absolute;left:194px;top:698px;width:1086px;height:32px;background:#121410;border-top-left-radius:6px;"></div>
<svg style="position:absolute;left:27px;top:708px;" width="9" height="12" viewBox="0 0 9 12" fill="none"><path d="M7 1 L2 6 L7 11" stroke="#8a8a8a" stroke-width="1.3"/></svg>
<svg style="position:absolute;left:60px;top:708px;" width="9" height="12" viewBox="0 0 9 12" fill="none"><path d="M2 1 L7 6 L2 11" stroke="#8a8a8a" stroke-width="1.3"/></svg>
<div style="position:absolute;left:116px;top:698px;width:78px;height:28px;background:#ffffff;border-radius:0 0 6px 6px;"></div>
<div id="t130" style="position:absolute;left:124.4px;top:704.20px;font-family:'Liberation Sans',sans-serif;font-size:14px;line-height:1;font-weight:400;font-style:normal;color:#1c1c1c;white-space:pre;transform-origin:left;transform:scaleX(1.0098);">Enter Info</div>
<div style="position:absolute;left:124px;top:720.5px;width:62px;height:2.5px;background:#1d7048;border-radius:1px;"></div>
<div style="position:absolute;left:198px;top:705px;width:1px;height:17px;background:#626262;"></div>
<div id="t131" style="position:absolute;left:213.25px;top:706.75px;font-family:'Liberation Sans',sans-serif;font-size:14px;line-height:1;font-weight:400;font-style:normal;color:#f2f2f2;white-space:pre;transform-origin:left;transform:scaleX(0.9476);">Sales Tax Form Filled</div>
<div style="position:absolute;left:356px;top:705px;width:1px;height:17px;background:#626262;"></div>
<div id="t132" style="position:absolute;left:370px;top:706.75px;font-family:'Liberation Sans',sans-serif;font-size:14px;line-height:1;font-weight:400;font-style:normal;color:#f2f2f2;white-space:pre;transform-origin:left;transform:scaleX(0.9705);">Query</div>
<div style="position:absolute;left:419px;top:705px;width:1px;height:17px;background:#626262;"></div>
<svg style="position:absolute;left:461px;top:707px;" width="13" height="13" viewBox="0 0 13 13" fill="none"><path d="M6.5 1 V12 M1 6.5 H12" stroke="#f0f0f0" stroke-width="1.2"/></svg>
<div style="position:absolute;left:769.5px;top:709.5px;width:2.2px;height:2.2px;background:#e8e8e8;border-radius:50%;"></div>
<div style="position:absolute;left:769.5px;top:714px;width:2.2px;height:2.2px;background:#e8e8e8;border-radius:50%;"></div>
<div style="position:absolute;left:769.5px;top:718.5px;width:2.2px;height:2.2px;background:#e8e8e8;border-radius:50%;"></div>
<svg style="position:absolute;left:790px;top:708px;" width="9" height="10" viewBox="0 0 9 10" fill="none"><path d="M8.5 0.5 V9.5 L0.5 5 Z" fill="#9a9a9a"/></svg>
<div style="position:absolute;left:803px;top:709px;width:356px;height:9px;background:#9c9c9c;border-radius:5px;"></div>
<svg style="position:absolute;left:1248px;top:708px;" width="8" height="10" viewBox="0 0 8 10" fill="none"><path d="M0.5 0.5 V9.5 L7.5 5 Z" fill="#9a9a9a"/></svg>
<div style="position:absolute;left:0px;top:730px;width:1280px;height:22px;background:#161616;"></div>
<div style="position:absolute;left:0px;top:730px;width:1280px;height:1px;background:#3a3a3a;"></div>
<div id="t133" style="position:absolute;left:11.6px;top:736.00px;font-family:'Liberation Sans',sans-serif;font-size:12px;line-height:1;font-weight:400;font-style:normal;color:#e8e8e8;white-space:pre;transform-origin:left;transform:scaleX(0.8649);">Ready</div>
<svg style="position:absolute;left:61px;top:733px;" width="17" height="16" viewBox="0 0 17 16" fill="none">
<circle cx="6.9" cy="3" r="1.7" stroke="#f0f0f0" stroke-width="1.1"/>
<path d="M1.5 4.5 C3 3.5 4.5 5.5 6.9 5.5 C9.3 5.5 10.8 3.5 12.3 4.5 C12.8 5.5 11 6.3 9.5 6.5" stroke="#f0f0f0" stroke-width="1.1" stroke-linecap="round"/>
<path d="M4.5 5.8 L3.8 14.5 L5.2 14.5 L6.3 9" stroke="#f0f0f0" stroke-width="1.1" stroke-linejoin="round"/>
<path d="M8.8 8.3 L15 14.5 M15 8.3 L8.8 14.5" stroke="#f0f0f0" stroke-width="1.1"/>
</svg>
<div id="t134" style="position:absolute;left:80.7px;top:736.00px;font-family:'Liberation Sans',sans-serif;font-size:12px;line-height:1;font-weight:700;font-style:normal;color:#f0f0f0;white-space:pre;transform-origin:left;transform:scaleX(0.8738);">Accessibility: Investigate</div>
<div id="t135" style="position:absolute;left:566px;top:735.30px;font-family:'Liberation Sans',sans-serif;font-size:12px;line-height:1;font-weight:400;font-style:normal;color:#e8e8e8;white-space:pre;transform-origin:left;transform:scaleX(0.9091);">Average: 164873.0182</div>
<div id="t136" style="position:absolute;left:692.5px;top:735.30px;font-family:'Liberation Sans',sans-serif;font-size:12px;line-height:1;font-weight:400;font-style:normal;color:#e8e8e8;white-space:pre;transform-origin:left;transform:scaleX(0.9491);">Count: 12</div>
<div id="t137" style="position:absolute;left:758px;top:735.30px;font-family:'Liberation Sans',sans-serif;font-size:12px;line-height:1;font-weight:400;font-style:normal;color:#e8e8e8;white-space:pre;transform-origin:left;transform:scaleX(0.8958);">Sum: 1813603.2</div>
<svg style="position:absolute;left:861px;top:735px;" width="17" height="15" viewBox="0 0 17 15" fill="none">
<path d="M5 11.5 H1.5 V1.5 H14.5 V6" stroke="#e8e8e8" stroke-width="1.1"/>
<circle cx="11" cy="11" r="2.3" stroke="#e8e8e8" stroke-width="1.1"/>
<path d="M11 7.5 V8.5 M11 13.5 V14.5 M7.5 11 H8.5 M13.5 11 H14.5" stroke="#e8e8e8" stroke-width="1.1"/>
</svg>
<div id="t138" style="position:absolute;left:879.7px;top:735.60px;font-family:'Liberation Sans',sans-serif;font-size:12px;line-height:1;font-weight:400;font-style:normal;color:#f0f0f0;white-space:pre;transform-origin:left;transform:scaleX(0.9332);">Display Settings</div>
<div style="position:absolute;left:980px;top:730px;width:39px;height:22px;background:#2d2d2d;"></div>
<svg style="position:absolute;left:992px;top:733px;" width="16" height="16" viewBox="0 0 16 16" fill="none"><rect x="1.5" y="1.5" width="13" height="13" stroke="#f0f0f0" stroke-width="1"/><path d="M1.5 5.5 H14.5 M1.5 10.5 H14.5 M5.5 1.5 V14.5 M10.5 1.5 V14.5" stroke="#f0f0f0" stroke-width="1"/></svg>
<svg style="position:absolute;left:1032px;top:733px;" width="17" height="15" viewBox="0 0 17 15" fill="none"><rect x="1.5" y="1.5" width="13" height="12.5" stroke="#f0f0f0" stroke-width="1.2"/><rect x="4.5" y="3.5" width="7" height="8.5" stroke="#f0f0f0" stroke-width="1.1"/><path d="M6 5.8 H10 M6 7.8 H10 M6 9.8 H10" stroke="#f0f0f0" stroke-width="0.9"/></svg>
<svg style="position:absolute;left:1072px;top:733px;" width="17" height="15" viewBox="0 0 17 15" fill="none"><rect x="1.5" y="1.5" width="13" height="12.5" stroke="#f0f0f0" stroke-width="1.2"/><path d="M1.5 8.5 H10.5 V1.5 M5.5 1.5 V8.5" stroke="#f0f0f0" stroke-width="1.1"/><path d="M2 11 H14" stroke="#8a8a8a" stroke-width="0.8" stroke-dasharray="1 1"/></svg>
<div style="position:absolute;left:1106px;top:740px;width:8px;height:1.3px;background:#e8e8e8;"></div>
<div style="position:absolute;left:1119px;top:740px;width:100px;height:1px;background:#a0a0a0;"></div>
<div style="position:absolute;left:1167px;top:736px;width:5px;height:11px;background:#a8a8a8;"></div>
<svg style="position:absolute;left:1223px;top:736px;" width="10" height="10" viewBox="0 0 10 10" fill="none"><path d="M5 0.5 V9.5 M0.5 5 H9.5" stroke="#e8e8e8" stroke-width="1.2"/></svg>
<div id="t139" style="position:absolute;left:1245.5px;top:735.60px;font-family:'Liberation Sans',sans-serif;font-size:12px;line-height:1;font-weight:400;font-style:normal;color:#f0f0f0;white-space:pre;transform-origin:left;transform:scaleX(0.8533);">100%</div>
</body></html>
